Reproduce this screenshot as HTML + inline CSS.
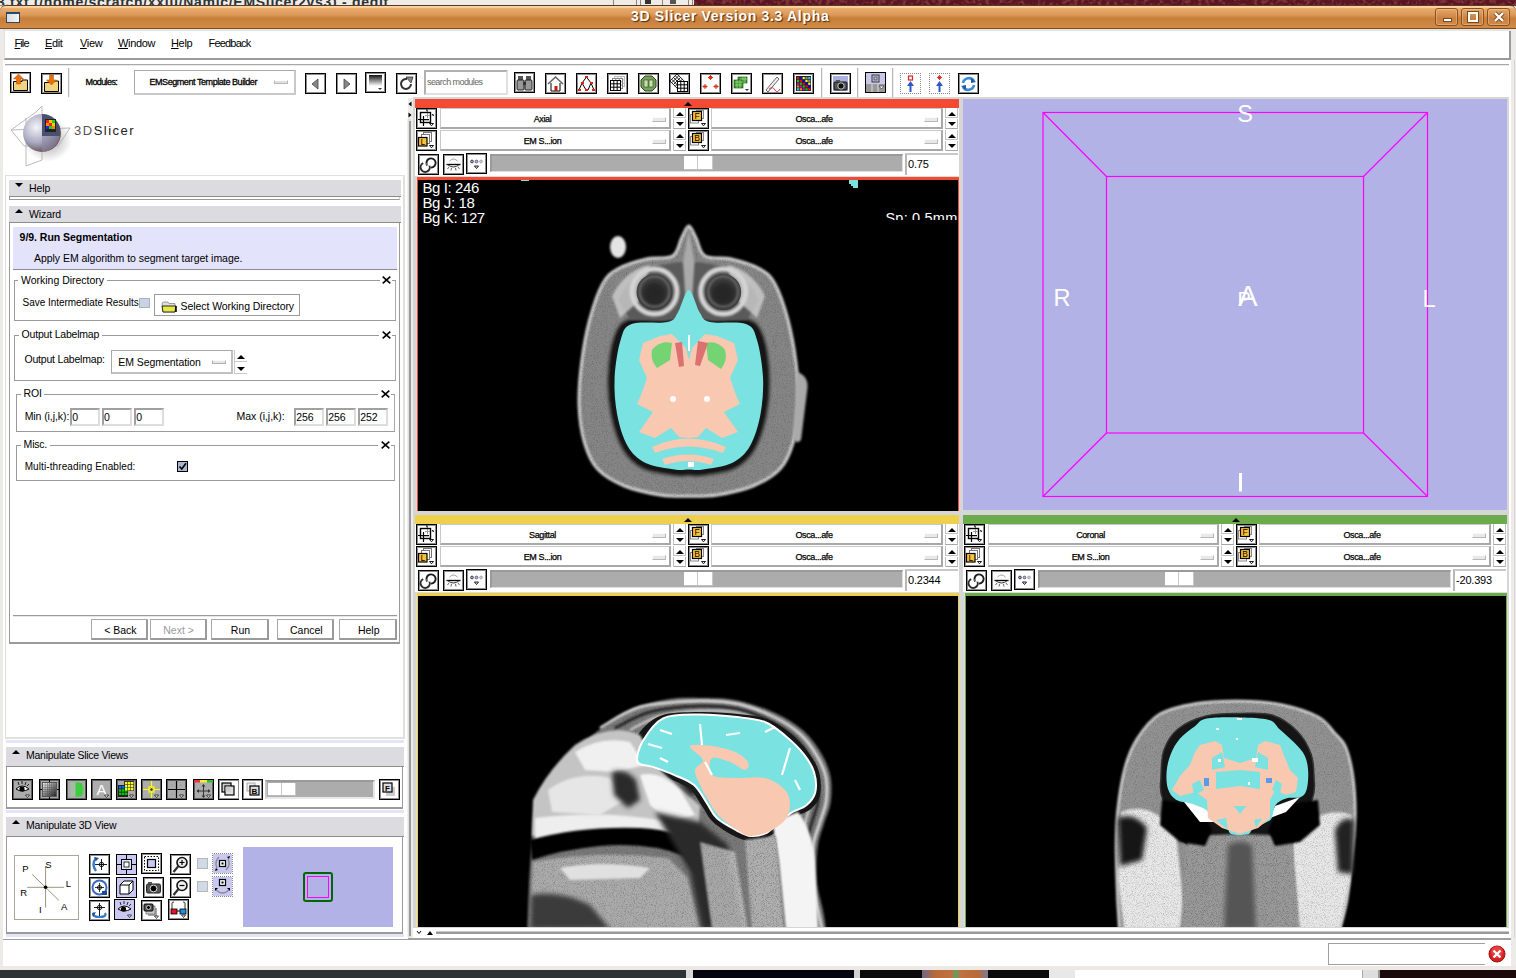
<!DOCTYPE html><html><head><meta charset="utf-8"><style>
*{margin:0;padding:0;box-sizing:border-box}
html,body{width:1516px;height:978px;overflow:hidden;background:#edebe8;font-family:"Liberation Sans",sans-serif;color:#000}
.a{position:absolute}
.t{position:absolute;white-space:nowrap;line-height:1}
.ib{position:absolute;width:21px;height:21px;border:1px solid #000;box-shadow:inset 0 0 0 1px rgba(0,0,0,.45);background:#fff;overflow:hidden}
.tu{position:absolute;width:0;height:0;border-left:4px solid transparent;border-right:4px solid transparent;border-bottom:4px solid #000}
.td{position:absolute;width:0;height:0;border-left:4px solid transparent;border-right:4px solid transparent;border-top:4px solid #000}
svg{position:absolute;overflow:visible}
</style></head><body>
<div class="a" style="left:0px;top:0px;width:694px;height:8px;background:#efebe7;overflow:hidden"><div class="t" style="left:-3px;top:-5.5px;font-size:14px;font-weight:bold;color:#2e3436;letter-spacing:0.7px">3.txt (/home/scratch/xxlu/Namic/EMSlicer2vs3) - gedit</div></div>
<div class="a" style="left:694px;top:0px;width:822px;height:8px;background:#5a1424"></div>
<svg style="left:694px;top:0;overflow:hidden" width="822" height="8"><defs><filter id="wp" x="0" y="0" width="100%" height="100%"><feTurbulence type="fractalNoise" baseFrequency="0.25" numOctaves="2" seed="7"/><feColorMatrix values="0 0 0 0 0.75  0 0 0 0 0.3  0 0 0 0 0.15  0 0 0 -4 2.2"/><feComposite in2="SourceGraphic" operator="in"/></filter></defs><rect width="822" height="8" fill="#fff" filter="url(#wp)" opacity=".25"/></svg>
<div class="a" style="left:0px;top:5px;width:694px;height:1px;background:#9a968f"></div>
<div class="a" style="left:613px;top:0px;width:1px;height:5px;background:#8a8680"></div>
<div class="a" style="left:636px;top:0px;width:1px;height:5px;background:#8a8680"></div>
<div class="a" style="left:640px;top:0px;width:1px;height:5px;background:#8a8680"></div>
<div class="a" style="left:662px;top:0px;width:1px;height:5px;background:#8a8680"></div>
<div class="a" style="left:688px;top:0px;width:1px;height:5px;background:#8a8680"></div>
<div class="a" style="left:692px;top:0px;width:1px;height:5px;background:#8a8680"></div>
<div class="a" style="left:645px;top:0px;width:6px;height:4px;background:#333"></div>
<div class="a" style="left:670px;top:0px;width:6px;height:4px;background:#555"></div>
<div class="a" style="left:0px;top:6px;width:1516px;height:964px;background:#edebe8"></div>
<div class="a" style="left:0px;top:5px;width:1516px;height:24px;border-radius:6px 6px 0 0;background:linear-gradient(#fbd3a4 0%,#fbd3a4 6%,#e8aa6a 12%,#dc9a5a 40%,#c67e3a 56%,#d28c48 100%);border-top:1px solid #5a3a20;border-bottom:1px solid #7e4a1c"></div>
<div class="t" style="left:631px;top:9px;font-size:14px;font-weight:bold;color:#fff;letter-spacing:0.68px;text-shadow:1px 1px 1px #4a2a08">3D Slicer Version 3.3 Alpha</div>
<div class="a" style="left:6px;top:12px;width:14px;height:11px;background:linear-gradient(90deg,#d8dde4,#f4f4f4);border:1px solid #3a4656;border-top:2px solid #2a4a6a"></div>
<div class="a" style="left:1435px;top:8px;width:23px;height:18px;border:1px solid #8a5020;border-radius:3px;background:linear-gradient(#e7a868,#c98040 60%,#d08c4c);box-shadow:inset 0 0 0 1px rgba(255,220,170,.35)"></div>
<div class="a" style="left:1461px;top:8px;width:23px;height:18px;border:1px solid #8a5020;border-radius:3px;background:linear-gradient(#e7a868,#c98040 60%,#d08c4c);box-shadow:inset 0 0 0 1px rgba(255,220,170,.35)"></div>
<div class="a" style="left:1487px;top:8px;width:23px;height:18px;border:1px solid #8a5020;border-radius:3px;background:linear-gradient(#e7a868,#c98040 60%,#d08c4c);box-shadow:inset 0 0 0 1px rgba(255,220,170,.35)"></div>
<div class="a" style="left:1443px;top:18px;width:9px;height:4px;background:#fff;border:1px solid #7a4a1a"></div>
<div class="a" style="left:1468px;top:12px;width:10px;height:10px;border:2px solid #fff;outline:1px solid #7a4a1a"></div>
<svg style="left:1493px;top:11px" width="12" height="12"><path d="M2 2L10 10M10 2L2 10" stroke="#7a4a1a" stroke-width="4"/><path d="M2 2L10 10M10 2L2 10" stroke="#fff" stroke-width="2.4"/></svg>
<div class="a" style="left:3px;top:29px;width:1508px;height:2px;background:#e4e4e4"></div>
<div class="a" style="left:4px;top:31px;width:1507px;height:29px;background:#fff;border-left:1px solid #e0e0e0;border-right:2px solid #9a9a9a;border-bottom:2px solid #9a9a9a"></div>
<div class="t" style="left:14.5px;top:38.34px;font-size:11px;letter-spacing:-0.9px"><u style="text-decoration-thickness:1px;text-underline-offset:1px">F</u>ile</div>
<div class="t" style="left:45px;top:38.34px;font-size:11px;letter-spacing:-0.35px"><u style="text-decoration-thickness:1px;text-underline-offset:1px">E</u>dit</div>
<div class="t" style="left:80px;top:38.34px;font-size:11px;letter-spacing:-0.35px"><u style="text-decoration-thickness:1px;text-underline-offset:1px">V</u>iew</div>
<div class="t" style="left:118px;top:38.34px;font-size:11px;letter-spacing:-0.35px"><u style="text-decoration-thickness:1px;text-underline-offset:1px">W</u>indow</div>
<div class="t" style="left:171px;top:38.34px;font-size:11px;letter-spacing:-0.35px"><u style="text-decoration-thickness:1px;text-underline-offset:1px">H</u>elp</div>
<div class="t" style="left:208.5px;top:38.34px;font-size:11px;letter-spacing:-0.8px">Feedback</div>
<div class="a" style="left:3px;top:60px;width:1508px;height:38px;background:#fff"></div>
<div class="a" style="left:5px;top:64px;width:1504px;height:2px;background:#a8a8a8;border-bottom:1px solid #e8e8e8"></div>
<div class="a" style="left:1511px;top:29px;width:5px;height:941px;background:#edebe8"></div>
<div class="a" style="left:1514px;top:60px;width:1px;height:878px;background:#d8d5d0"></div>
<div class="a" style="left:3px;top:938px;width:1508px;height:2px;background:#a0a0a0"></div>
<div class="a" style="left:3px;top:940px;width:1508px;height:26px;background:#fff"></div>
<div class="a" style="left:1328px;top:943px;width:157px;height:22px;border:1px solid #a0a0a0;border-right:none;background:#fff"></div>
<svg style="left:1488px;top:945px" width="18" height="18"><circle cx="9" cy="9" r="8" fill="#d42020" stroke="#a01010"/><circle cx="9" cy="7" r="6" fill="#ff5a5a" opacity=".5"/><path d="M5.5 5.5L12.5 12.5M12.5 5.5L5.5 12.5" stroke="#fff" stroke-width="2.4"/></svg>
<div class="a" style="left:0px;top:966px;width:1516px;height:4px;background:#ece9e4"></div>
<div class="a" style="left:0px;top:970px;width:1516px;height:8px;background:#2e3436"></div>
<div class="a" style="left:686px;top:970px;width:7px;height:8px;background:#d8d8d8"></div>
<div class="a" style="left:693px;top:970px;width:161px;height:8px;background:#050510"></div>
<div class="a" style="left:854px;top:970px;width:6px;height:8px;background:#d0d0d0"></div>
<div class="a" style="left:860px;top:970px;width:189px;height:8px;background:#0a0a0a"></div>
<div class="a" style="left:922px;top:970px;width:66px;height:8px;background:linear-gradient(90deg,#6a6a8a,#b86a38 20%,#c07040 45%,#60a060 50%,#c07040 60%,#b86a38 85%,#7a7a9a)"></div>
<div class="a" style="left:1049px;top:970px;width:26px;height:8px;background:#e8e8e8"></div>
<div class="a" style="left:1075px;top:970px;width:287px;height:8px;background:#fff"></div>
<div class="a" style="left:1362px;top:970px;width:18px;height:8px;background:#dedede;border-left:1px solid #aaa;border-right:2px solid #999"></div>
<div class="a" style="left:1380px;top:970px;width:136px;height:8px;background:#1a0a0c"></div>
<div class="a" style="left:413px;top:97px;width:1096px;height:833px;background:#d6d6d6"></div>
<div class="a" style="left:1509px;top:97px;width:2px;height:841px;background:#fff"></div>
<div class="a" style="left:415px;top:99px;width:544px;height:9px;background:#f24b33"></div>
<div class="a" style="left:415px;top:108px;width:544px;height:68px;background:#fff"></div>
<div class="tu" style="left:684px;top:102px"></div>
<div class="ib" style="left:416px;top:108px;width:21px;height:21px;background:#fff;"><svg style="left:0;top:0" width="19" height="19" viewBox="0 0 19 19"><rect x="3.5" y="3.5" width="10" height="10" fill="none" stroke="#000" stroke-width="1.4"/><path d="M10.5 4V9M8 6.5H13" stroke="#999" stroke-width="1"/><path d="M4 11.5H12" stroke="#bbb" stroke-width="1"/><path d="M1 10.5H12M6.5 7V17M9.5 0.5L10.5 2.5M15 5.5L17 6.5" stroke="#000" stroke-width="1.2"/><path d="M12.5 14.5H16.5L14.5 16.8Z" fill="#fff" stroke="#000" stroke-width=".9"/></svg></div>
<div class="a" style="left:440px;top:108px;width:231px;height:21px;background:#fff;border-top:1px solid #c8c8c8;border-left:1px solid #c8c8c8;border-right:2px solid #a8a8a8;border-bottom:2px solid #a8a8a8"><div class="t" style="left:0;width:203px;text-align:center;top:6.0px;font-size:9px;letter-spacing:-0.4px;color:#000;-webkit-text-stroke:0.25px #000">Axial</div><div class="a" style="left:211px;top:8px;width:14px;height:5px;background:#e8e8e8;border:1px solid #b8b8b8;border-top-color:#fafafa;border-left-color:#fafafa"></div></div>
<div class="a" style="left:673px;top:108px;width:13px;height:10px;border-left:1px solid #c0c0c0;border-bottom:1px solid #c0c0c0;border-right:1px solid #c0c0c0"></div>
<div class="a" style="left:673px;top:119px;width:13px;height:10px;border-left:1px solid #c0c0c0;border-bottom:1px solid #a8a8a8;border-right:1px solid #c0c0c0"></div>
<div class="tu" style="left:675.5px;top:112px"></div><div class="td" style="left:675.5px;top:122px"></div>
<div class="ib" style="left:688px;top:108px;width:21px;height:21px;background:#fff;"><svg style="left:0;top:0" width="19" height="19" viewBox="0 0 19 19"><rect x="7.5" y="1.5" width="7" height="8" fill="#fff" stroke="#888" stroke-width="1"/><rect x="1.5" y="5.5" width="8" height="8.5" fill="#fff" stroke="#888" stroke-width="1"/><rect x="3.5" y="2.5" width="9" height="9" fill="#fcc03a" stroke="#000" stroke-width="1.2"/><text x="8" y="10.2" font-size="8.5" font-family="Liberation Sans" text-anchor="middle">F</text><path d="M12.5 14.5H16.5L14.5 16.8Z" fill="#fff" stroke="#000" stroke-width=".9"/></svg></div>
<div class="a" style="left:711px;top:108px;width:232px;height:21px;background:#fff;border-top:1px solid #c8c8c8;border-left:1px solid #c8c8c8;border-right:2px solid #a8a8a8;border-bottom:2px solid #a8a8a8"><div class="t" style="left:0;width:204px;text-align:center;top:6.0px;font-size:9px;letter-spacing:-0.4px;color:#000;-webkit-text-stroke:0.25px #000">Osca...afe</div><div class="a" style="left:212px;top:8px;width:14px;height:5px;background:#e8e8e8;border:1px solid #b8b8b8;border-top-color:#fafafa;border-left-color:#fafafa"></div></div>
<div class="a" style="left:945px;top:108px;width:13px;height:10px;border-left:1px solid #c0c0c0;border-bottom:1px solid #c0c0c0;border-right:1px solid #c0c0c0"></div>
<div class="a" style="left:945px;top:119px;width:13px;height:10px;border-left:1px solid #c0c0c0;border-bottom:1px solid #a8a8a8;border-right:1px solid #c0c0c0"></div>
<div class="tu" style="left:947.5px;top:112px"></div><div class="td" style="left:947.5px;top:122px"></div>
<div class="ib" style="left:416px;top:130px;width:21px;height:21px;background:#fff;"><svg style="left:0;top:0" width="19" height="19" viewBox="0 0 19 19"><rect x="6.5" y="1.5" width="8" height="9" fill="#fff" stroke="#777" stroke-width="1"/><rect x="4.5" y="3.5" width="8" height="9" fill="#fff" stroke="#777" stroke-width="1"/><rect x="1.5" y="6.5" width="8.5" height="8.5" fill="#fcc03a" stroke="#000" stroke-width="1.2"/><text x="5.8" y="13.5" font-size="8.5" font-family="Liberation Sans" text-anchor="middle">L</text><path d="M12.5 14.5H16.5L14.5 16.8Z" fill="#fff" stroke="#000" stroke-width=".9"/></svg></div>
<div class="a" style="left:440px;top:130px;width:231px;height:21px;background:#fff;border-top:1px solid #c8c8c8;border-left:1px solid #c8c8c8;border-right:2px solid #a8a8a8;border-bottom:2px solid #a8a8a8"><div class="t" style="left:0;width:203px;text-align:center;top:6.0px;font-size:9px;letter-spacing:-0.4px;color:#000;-webkit-text-stroke:0.25px #000">EM S...ion</div><div class="a" style="left:211px;top:8px;width:14px;height:5px;background:#e8e8e8;border:1px solid #b8b8b8;border-top-color:#fafafa;border-left-color:#fafafa"></div></div>
<div class="a" style="left:673px;top:130px;width:13px;height:10px;border-left:1px solid #c0c0c0;border-bottom:1px solid #c0c0c0;border-right:1px solid #c0c0c0"></div>
<div class="a" style="left:673px;top:141px;width:13px;height:10px;border-left:1px solid #c0c0c0;border-bottom:1px solid #a8a8a8;border-right:1px solid #c0c0c0"></div>
<div class="tu" style="left:675.5px;top:134px"></div><div class="td" style="left:675.5px;top:144px"></div>
<div class="ib" style="left:688px;top:130px;width:21px;height:21px;background:#fff;"><svg style="left:0;top:0" width="19" height="19" viewBox="0 0 19 19"><rect x="7.5" y="1.5" width="7" height="8" fill="#fff" stroke="#888" stroke-width="1"/><rect x="1.5" y="5.5" width="8" height="8.5" fill="#fff" stroke="#888" stroke-width="1"/><rect x="3.5" y="2.5" width="9" height="9" fill="#fcc03a" stroke="#000" stroke-width="1.2"/><text x="8" y="10.2" font-size="8.5" font-family="Liberation Sans" text-anchor="middle">B</text><path d="M12.5 14.5H16.5L14.5 16.8Z" fill="#fff" stroke="#000" stroke-width=".9"/></svg></div>
<div class="a" style="left:711px;top:130px;width:232px;height:21px;background:#fff;border-top:1px solid #c8c8c8;border-left:1px solid #c8c8c8;border-right:2px solid #a8a8a8;border-bottom:2px solid #a8a8a8"><div class="t" style="left:0;width:204px;text-align:center;top:6.0px;font-size:9px;letter-spacing:-0.4px;color:#000;-webkit-text-stroke:0.25px #000">Osca...afe</div><div class="a" style="left:212px;top:8px;width:14px;height:5px;background:#e8e8e8;border:1px solid #b8b8b8;border-top-color:#fafafa;border-left-color:#fafafa"></div></div>
<div class="a" style="left:945px;top:130px;width:13px;height:10px;border-left:1px solid #c0c0c0;border-bottom:1px solid #c0c0c0;border-right:1px solid #c0c0c0"></div>
<div class="a" style="left:945px;top:141px;width:13px;height:10px;border-left:1px solid #c0c0c0;border-bottom:1px solid #a8a8a8;border-right:1px solid #c0c0c0"></div>
<div class="tu" style="left:947.5px;top:134px"></div><div class="td" style="left:947.5px;top:144px"></div>
<div class="ib" style="left:418px;top:154px;width:21px;height:21px;background:#fff;"><svg style="left:0;top:0" width="19" height="19" viewBox="0 0 19 19"><path d="M8.2 10.5A4.6 4.6 0 1 1 12 12.6" fill="none" stroke="#1a1a1a" stroke-width="1.9"/><path d="M10.5 10.8A4.6 4.6 0 1 1 4.2 8.2" fill="none" stroke="#2a2a2a" stroke-width="1.9"/><path d="M6.5 8L9.5 11" stroke="#aaa" stroke-width="1"/></svg></div>
<div class="ib" style="left:443px;top:154px;width:21px;height:21px;background:#fafafa;"><svg style="left:0;top:0" width="19" height="19" viewBox="0 0 19 19"><path d="M2.5 9.5H16.5" stroke="#000" stroke-width="1.3"/><path d="M3.5 9.5Q9.5 14.5 15.5 9.5" fill="none" stroke="#333" stroke-width="1"/><path d="M5 12L3.5 14M7.5 13L7 15.5M11.5 13L12 15.5M14 12L15.5 14" stroke="#555" stroke-width=".9"/><path d="M5.5 6Q9.5 2 13.5 6" fill="none" stroke="#999" stroke-width=".9"/></svg></div>
<div class="ib" style="left:466px;top:153px;width:21px;height:21px;background:#fff;"><svg style="left:0;top:0" width="19" height="19" viewBox="0 0 19 19"><circle cx="5" cy="7.5" r="1.4" fill="#a8b0d8" stroke="#222" stroke-width=".8"/><circle cx="9.5" cy="7.5" r="1.4" fill="#a8b0d8" stroke="#555" stroke-width=".8"/><circle cx="14" cy="7.5" r="1.4" fill="#c8cce8" stroke="#999" stroke-width=".8"/><path d="M7.5 12H11.5L9.5 14.5Z" fill="#fff" stroke="#000" stroke-width=".9"/></svg></div>
<div class="a" style="left:490px;top:154px;width:413px;height:18px;background:#acacac;border-top:2px solid #9a9a9a;border-left:2px solid #9a9a9a;border-bottom:1px solid #e0e0e0;border-right:1px solid #e0e0e0"></div>
<div class="a" style="left:684.4px;top:156px;width:29px;height:14px;background:#fff;border-right:1px solid #c8c8c8;border-bottom:1px solid #c0c0c0"><div class="a" style="left:13px;top:0;width:1px;height:13px;background:#c8c8c8"></div></div>
<div class="a" style="left:905px;top:153px;width:53px;height:22px;background:#fff;border-top:2px solid #c8c8c8;border-left:2px solid #b8b8b8"><div class="t" style="left:1px;top:4px;font-size:11px;letter-spacing:-0.2px">0.75</div></div>
<div class="a" style="left:416px;top:176px;width:543px;height:335px;background:#dcdcdc"></div>
<div class="a" style="left:417px;top:177px;width:542px;height:334px;background:#f24b33"></div>
<div class="a" style="left:418px;top:180px;width:540px;height:330.5px;background:#000;overflow:hidden"></div>
<div class="a" style="left:415px;top:515px;width:544px;height:9px;background:#edd04b"></div>
<div class="a" style="left:415px;top:524px;width:544px;height:68px;background:#fff"></div>
<div class="tu" style="left:684px;top:518px"></div>
<div class="ib" style="left:416px;top:524px;width:21px;height:21px;background:#fff;"><svg style="left:0;top:0" width="19" height="19" viewBox="0 0 19 19"><rect x="3.5" y="3.5" width="10" height="10" fill="none" stroke="#000" stroke-width="1.4"/><path d="M10.5 4V9M8 6.5H13" stroke="#999" stroke-width="1"/><path d="M4 11.5H12" stroke="#bbb" stroke-width="1"/><path d="M1 10.5H12M6.5 7V17M9.5 0.5L10.5 2.5M15 5.5L17 6.5" stroke="#000" stroke-width="1.2"/><path d="M12.5 14.5H16.5L14.5 16.8Z" fill="#fff" stroke="#000" stroke-width=".9"/></svg></div>
<div class="a" style="left:440px;top:524px;width:231px;height:21px;background:#fff;border-top:1px solid #c8c8c8;border-left:1px solid #c8c8c8;border-right:2px solid #a8a8a8;border-bottom:2px solid #a8a8a8"><div class="t" style="left:0;width:203px;text-align:center;top:6.0px;font-size:9px;letter-spacing:-0.4px;color:#000;-webkit-text-stroke:0.25px #000">Sagittal</div><div class="a" style="left:211px;top:8px;width:14px;height:5px;background:#e8e8e8;border:1px solid #b8b8b8;border-top-color:#fafafa;border-left-color:#fafafa"></div></div>
<div class="a" style="left:673px;top:524px;width:13px;height:10px;border-left:1px solid #c0c0c0;border-bottom:1px solid #c0c0c0;border-right:1px solid #c0c0c0"></div>
<div class="a" style="left:673px;top:535px;width:13px;height:10px;border-left:1px solid #c0c0c0;border-bottom:1px solid #a8a8a8;border-right:1px solid #c0c0c0"></div>
<div class="tu" style="left:675.5px;top:528px"></div><div class="td" style="left:675.5px;top:538px"></div>
<div class="ib" style="left:688px;top:524px;width:21px;height:21px;background:#fff;"><svg style="left:0;top:0" width="19" height="19" viewBox="0 0 19 19"><rect x="7.5" y="1.5" width="7" height="8" fill="#fff" stroke="#888" stroke-width="1"/><rect x="1.5" y="5.5" width="8" height="8.5" fill="#fff" stroke="#888" stroke-width="1"/><rect x="3.5" y="2.5" width="9" height="9" fill="#fcc03a" stroke="#000" stroke-width="1.2"/><text x="8" y="10.2" font-size="8.5" font-family="Liberation Sans" text-anchor="middle">F</text><path d="M12.5 14.5H16.5L14.5 16.8Z" fill="#fff" stroke="#000" stroke-width=".9"/></svg></div>
<div class="a" style="left:711px;top:524px;width:232px;height:21px;background:#fff;border-top:1px solid #c8c8c8;border-left:1px solid #c8c8c8;border-right:2px solid #a8a8a8;border-bottom:2px solid #a8a8a8"><div class="t" style="left:0;width:204px;text-align:center;top:6.0px;font-size:9px;letter-spacing:-0.4px;color:#000;-webkit-text-stroke:0.25px #000">Osca...afe</div><div class="a" style="left:212px;top:8px;width:14px;height:5px;background:#e8e8e8;border:1px solid #b8b8b8;border-top-color:#fafafa;border-left-color:#fafafa"></div></div>
<div class="a" style="left:945px;top:524px;width:13px;height:10px;border-left:1px solid #c0c0c0;border-bottom:1px solid #c0c0c0;border-right:1px solid #c0c0c0"></div>
<div class="a" style="left:945px;top:535px;width:13px;height:10px;border-left:1px solid #c0c0c0;border-bottom:1px solid #a8a8a8;border-right:1px solid #c0c0c0"></div>
<div class="tu" style="left:947.5px;top:528px"></div><div class="td" style="left:947.5px;top:538px"></div>
<div class="ib" style="left:416px;top:546px;width:21px;height:21px;background:#fff;"><svg style="left:0;top:0" width="19" height="19" viewBox="0 0 19 19"><rect x="6.5" y="1.5" width="8" height="9" fill="#fff" stroke="#777" stroke-width="1"/><rect x="4.5" y="3.5" width="8" height="9" fill="#fff" stroke="#777" stroke-width="1"/><rect x="1.5" y="6.5" width="8.5" height="8.5" fill="#fcc03a" stroke="#000" stroke-width="1.2"/><text x="5.8" y="13.5" font-size="8.5" font-family="Liberation Sans" text-anchor="middle">L</text><path d="M12.5 14.5H16.5L14.5 16.8Z" fill="#fff" stroke="#000" stroke-width=".9"/></svg></div>
<div class="a" style="left:440px;top:546px;width:231px;height:21px;background:#fff;border-top:1px solid #c8c8c8;border-left:1px solid #c8c8c8;border-right:2px solid #a8a8a8;border-bottom:2px solid #a8a8a8"><div class="t" style="left:0;width:203px;text-align:center;top:6.0px;font-size:9px;letter-spacing:-0.4px;color:#000;-webkit-text-stroke:0.25px #000">EM S...ion</div><div class="a" style="left:211px;top:8px;width:14px;height:5px;background:#e8e8e8;border:1px solid #b8b8b8;border-top-color:#fafafa;border-left-color:#fafafa"></div></div>
<div class="a" style="left:673px;top:546px;width:13px;height:10px;border-left:1px solid #c0c0c0;border-bottom:1px solid #c0c0c0;border-right:1px solid #c0c0c0"></div>
<div class="a" style="left:673px;top:557px;width:13px;height:10px;border-left:1px solid #c0c0c0;border-bottom:1px solid #a8a8a8;border-right:1px solid #c0c0c0"></div>
<div class="tu" style="left:675.5px;top:550px"></div><div class="td" style="left:675.5px;top:560px"></div>
<div class="ib" style="left:688px;top:546px;width:21px;height:21px;background:#fff;"><svg style="left:0;top:0" width="19" height="19" viewBox="0 0 19 19"><rect x="7.5" y="1.5" width="7" height="8" fill="#fff" stroke="#888" stroke-width="1"/><rect x="1.5" y="5.5" width="8" height="8.5" fill="#fff" stroke="#888" stroke-width="1"/><rect x="3.5" y="2.5" width="9" height="9" fill="#fcc03a" stroke="#000" stroke-width="1.2"/><text x="8" y="10.2" font-size="8.5" font-family="Liberation Sans" text-anchor="middle">B</text><path d="M12.5 14.5H16.5L14.5 16.8Z" fill="#fff" stroke="#000" stroke-width=".9"/></svg></div>
<div class="a" style="left:711px;top:546px;width:232px;height:21px;background:#fff;border-top:1px solid #c8c8c8;border-left:1px solid #c8c8c8;border-right:2px solid #a8a8a8;border-bottom:2px solid #a8a8a8"><div class="t" style="left:0;width:204px;text-align:center;top:6.0px;font-size:9px;letter-spacing:-0.4px;color:#000;-webkit-text-stroke:0.25px #000">Osca...afe</div><div class="a" style="left:212px;top:8px;width:14px;height:5px;background:#e8e8e8;border:1px solid #b8b8b8;border-top-color:#fafafa;border-left-color:#fafafa"></div></div>
<div class="a" style="left:945px;top:546px;width:13px;height:10px;border-left:1px solid #c0c0c0;border-bottom:1px solid #c0c0c0;border-right:1px solid #c0c0c0"></div>
<div class="a" style="left:945px;top:557px;width:13px;height:10px;border-left:1px solid #c0c0c0;border-bottom:1px solid #a8a8a8;border-right:1px solid #c0c0c0"></div>
<div class="tu" style="left:947.5px;top:550px"></div><div class="td" style="left:947.5px;top:560px"></div>
<div class="ib" style="left:418px;top:570px;width:21px;height:21px;background:#fff;"><svg style="left:0;top:0" width="19" height="19" viewBox="0 0 19 19"><path d="M8.2 10.5A4.6 4.6 0 1 1 12 12.6" fill="none" stroke="#1a1a1a" stroke-width="1.9"/><path d="M10.5 10.8A4.6 4.6 0 1 1 4.2 8.2" fill="none" stroke="#2a2a2a" stroke-width="1.9"/><path d="M6.5 8L9.5 11" stroke="#aaa" stroke-width="1"/></svg></div>
<div class="ib" style="left:443px;top:570px;width:21px;height:21px;background:#fafafa;"><svg style="left:0;top:0" width="19" height="19" viewBox="0 0 19 19"><path d="M2.5 9.5H16.5" stroke="#000" stroke-width="1.3"/><path d="M3.5 9.5Q9.5 14.5 15.5 9.5" fill="none" stroke="#333" stroke-width="1"/><path d="M5 12L3.5 14M7.5 13L7 15.5M11.5 13L12 15.5M14 12L15.5 14" stroke="#555" stroke-width=".9"/><path d="M5.5 6Q9.5 2 13.5 6" fill="none" stroke="#999" stroke-width=".9"/></svg></div>
<div class="ib" style="left:466px;top:569px;width:21px;height:21px;background:#fff;"><svg style="left:0;top:0" width="19" height="19" viewBox="0 0 19 19"><circle cx="5" cy="7.5" r="1.4" fill="#a8b0d8" stroke="#222" stroke-width=".8"/><circle cx="9.5" cy="7.5" r="1.4" fill="#a8b0d8" stroke="#555" stroke-width=".8"/><circle cx="14" cy="7.5" r="1.4" fill="#c8cce8" stroke="#999" stroke-width=".8"/><path d="M7.5 12H11.5L9.5 14.5Z" fill="#fff" stroke="#000" stroke-width=".9"/></svg></div>
<div class="a" style="left:490px;top:570px;width:413px;height:18px;background:#acacac;border-top:2px solid #9a9a9a;border-left:2px solid #9a9a9a;border-bottom:1px solid #e0e0e0;border-right:1px solid #e0e0e0"></div>
<div class="a" style="left:684.4px;top:572px;width:29px;height:14px;background:#fff;border-right:1px solid #c8c8c8;border-bottom:1px solid #c0c0c0"><div class="a" style="left:13px;top:0;width:1px;height:13px;background:#c8c8c8"></div></div>
<div class="a" style="left:905px;top:569px;width:53px;height:22px;background:#fff;border-top:2px solid #c8c8c8;border-left:2px solid #b8b8b8"><div class="t" style="left:1px;top:4px;font-size:11px;letter-spacing:-0.2px">0.2344</div></div>
<div class="a" style="left:416px;top:592px;width:543px;height:335px;background:#dcdcdc"></div>
<div class="a" style="left:417px;top:593px;width:542px;height:334px;background:#edd04b"></div>
<div class="a" style="left:418px;top:596px;width:540px;height:330.5px;background:#000;overflow:hidden"></div>
<div class="a" style="left:963px;top:515px;width:544px;height:9px;background:#6cab4c"></div>
<div class="a" style="left:963px;top:524px;width:544px;height:68px;background:#fff"></div>
<div class="tu" style="left:1232px;top:518px"></div>
<div class="ib" style="left:964px;top:524px;width:21px;height:21px;background:#fff;"><svg style="left:0;top:0" width="19" height="19" viewBox="0 0 19 19"><rect x="3.5" y="3.5" width="10" height="10" fill="none" stroke="#000" stroke-width="1.4"/><path d="M10.5 4V9M8 6.5H13" stroke="#999" stroke-width="1"/><path d="M4 11.5H12" stroke="#bbb" stroke-width="1"/><path d="M1 10.5H12M6.5 7V17M9.5 0.5L10.5 2.5M15 5.5L17 6.5" stroke="#000" stroke-width="1.2"/><path d="M12.5 14.5H16.5L14.5 16.8Z" fill="#fff" stroke="#000" stroke-width=".9"/></svg></div>
<div class="a" style="left:988px;top:524px;width:231px;height:21px;background:#fff;border-top:1px solid #c8c8c8;border-left:1px solid #c8c8c8;border-right:2px solid #a8a8a8;border-bottom:2px solid #a8a8a8"><div class="t" style="left:0;width:203px;text-align:center;top:6.0px;font-size:9px;letter-spacing:-0.4px;color:#000;-webkit-text-stroke:0.25px #000">Coronal</div><div class="a" style="left:211px;top:8px;width:14px;height:5px;background:#e8e8e8;border:1px solid #b8b8b8;border-top-color:#fafafa;border-left-color:#fafafa"></div></div>
<div class="a" style="left:1221px;top:524px;width:13px;height:10px;border-left:1px solid #c0c0c0;border-bottom:1px solid #c0c0c0;border-right:1px solid #c0c0c0"></div>
<div class="a" style="left:1221px;top:535px;width:13px;height:10px;border-left:1px solid #c0c0c0;border-bottom:1px solid #a8a8a8;border-right:1px solid #c0c0c0"></div>
<div class="tu" style="left:1223.5px;top:528px"></div><div class="td" style="left:1223.5px;top:538px"></div>
<div class="ib" style="left:1236px;top:524px;width:21px;height:21px;background:#fff;"><svg style="left:0;top:0" width="19" height="19" viewBox="0 0 19 19"><rect x="7.5" y="1.5" width="7" height="8" fill="#fff" stroke="#888" stroke-width="1"/><rect x="1.5" y="5.5" width="8" height="8.5" fill="#fff" stroke="#888" stroke-width="1"/><rect x="3.5" y="2.5" width="9" height="9" fill="#fcc03a" stroke="#000" stroke-width="1.2"/><text x="8" y="10.2" font-size="8.5" font-family="Liberation Sans" text-anchor="middle">F</text><path d="M12.5 14.5H16.5L14.5 16.8Z" fill="#fff" stroke="#000" stroke-width=".9"/></svg></div>
<div class="a" style="left:1259px;top:524px;width:232px;height:21px;background:#fff;border-top:1px solid #c8c8c8;border-left:1px solid #c8c8c8;border-right:2px solid #a8a8a8;border-bottom:2px solid #a8a8a8"><div class="t" style="left:0;width:204px;text-align:center;top:6.0px;font-size:9px;letter-spacing:-0.4px;color:#000;-webkit-text-stroke:0.25px #000">Osca...afe</div><div class="a" style="left:212px;top:8px;width:14px;height:5px;background:#e8e8e8;border:1px solid #b8b8b8;border-top-color:#fafafa;border-left-color:#fafafa"></div></div>
<div class="a" style="left:1493px;top:524px;width:13px;height:10px;border-left:1px solid #c0c0c0;border-bottom:1px solid #c0c0c0;border-right:1px solid #c0c0c0"></div>
<div class="a" style="left:1493px;top:535px;width:13px;height:10px;border-left:1px solid #c0c0c0;border-bottom:1px solid #a8a8a8;border-right:1px solid #c0c0c0"></div>
<div class="tu" style="left:1495.5px;top:528px"></div><div class="td" style="left:1495.5px;top:538px"></div>
<div class="ib" style="left:964px;top:546px;width:21px;height:21px;background:#fff;"><svg style="left:0;top:0" width="19" height="19" viewBox="0 0 19 19"><rect x="6.5" y="1.5" width="8" height="9" fill="#fff" stroke="#777" stroke-width="1"/><rect x="4.5" y="3.5" width="8" height="9" fill="#fff" stroke="#777" stroke-width="1"/><rect x="1.5" y="6.5" width="8.5" height="8.5" fill="#fcc03a" stroke="#000" stroke-width="1.2"/><text x="5.8" y="13.5" font-size="8.5" font-family="Liberation Sans" text-anchor="middle">L</text><path d="M12.5 14.5H16.5L14.5 16.8Z" fill="#fff" stroke="#000" stroke-width=".9"/></svg></div>
<div class="a" style="left:988px;top:546px;width:231px;height:21px;background:#fff;border-top:1px solid #c8c8c8;border-left:1px solid #c8c8c8;border-right:2px solid #a8a8a8;border-bottom:2px solid #a8a8a8"><div class="t" style="left:0;width:203px;text-align:center;top:6.0px;font-size:9px;letter-spacing:-0.4px;color:#000;-webkit-text-stroke:0.25px #000">EM S...ion</div><div class="a" style="left:211px;top:8px;width:14px;height:5px;background:#e8e8e8;border:1px solid #b8b8b8;border-top-color:#fafafa;border-left-color:#fafafa"></div></div>
<div class="a" style="left:1221px;top:546px;width:13px;height:10px;border-left:1px solid #c0c0c0;border-bottom:1px solid #c0c0c0;border-right:1px solid #c0c0c0"></div>
<div class="a" style="left:1221px;top:557px;width:13px;height:10px;border-left:1px solid #c0c0c0;border-bottom:1px solid #a8a8a8;border-right:1px solid #c0c0c0"></div>
<div class="tu" style="left:1223.5px;top:550px"></div><div class="td" style="left:1223.5px;top:560px"></div>
<div class="ib" style="left:1236px;top:546px;width:21px;height:21px;background:#fff;"><svg style="left:0;top:0" width="19" height="19" viewBox="0 0 19 19"><rect x="7.5" y="1.5" width="7" height="8" fill="#fff" stroke="#888" stroke-width="1"/><rect x="1.5" y="5.5" width="8" height="8.5" fill="#fff" stroke="#888" stroke-width="1"/><rect x="3.5" y="2.5" width="9" height="9" fill="#fcc03a" stroke="#000" stroke-width="1.2"/><text x="8" y="10.2" font-size="8.5" font-family="Liberation Sans" text-anchor="middle">B</text><path d="M12.5 14.5H16.5L14.5 16.8Z" fill="#fff" stroke="#000" stroke-width=".9"/></svg></div>
<div class="a" style="left:1259px;top:546px;width:232px;height:21px;background:#fff;border-top:1px solid #c8c8c8;border-left:1px solid #c8c8c8;border-right:2px solid #a8a8a8;border-bottom:2px solid #a8a8a8"><div class="t" style="left:0;width:204px;text-align:center;top:6.0px;font-size:9px;letter-spacing:-0.4px;color:#000;-webkit-text-stroke:0.25px #000">Osca...afe</div><div class="a" style="left:212px;top:8px;width:14px;height:5px;background:#e8e8e8;border:1px solid #b8b8b8;border-top-color:#fafafa;border-left-color:#fafafa"></div></div>
<div class="a" style="left:1493px;top:546px;width:13px;height:10px;border-left:1px solid #c0c0c0;border-bottom:1px solid #c0c0c0;border-right:1px solid #c0c0c0"></div>
<div class="a" style="left:1493px;top:557px;width:13px;height:10px;border-left:1px solid #c0c0c0;border-bottom:1px solid #a8a8a8;border-right:1px solid #c0c0c0"></div>
<div class="tu" style="left:1495.5px;top:550px"></div><div class="td" style="left:1495.5px;top:560px"></div>
<div class="ib" style="left:966px;top:570px;width:21px;height:21px;background:#fff;"><svg style="left:0;top:0" width="19" height="19" viewBox="0 0 19 19"><path d="M8.2 10.5A4.6 4.6 0 1 1 12 12.6" fill="none" stroke="#1a1a1a" stroke-width="1.9"/><path d="M10.5 10.8A4.6 4.6 0 1 1 4.2 8.2" fill="none" stroke="#2a2a2a" stroke-width="1.9"/><path d="M6.5 8L9.5 11" stroke="#aaa" stroke-width="1"/></svg></div>
<div class="ib" style="left:991px;top:570px;width:21px;height:21px;background:#fafafa;"><svg style="left:0;top:0" width="19" height="19" viewBox="0 0 19 19"><path d="M2.5 9.5H16.5" stroke="#000" stroke-width="1.3"/><path d="M3.5 9.5Q9.5 14.5 15.5 9.5" fill="none" stroke="#333" stroke-width="1"/><path d="M5 12L3.5 14M7.5 13L7 15.5M11.5 13L12 15.5M14 12L15.5 14" stroke="#555" stroke-width=".9"/><path d="M5.5 6Q9.5 2 13.5 6" fill="none" stroke="#999" stroke-width=".9"/></svg></div>
<div class="ib" style="left:1014px;top:569px;width:21px;height:21px;background:#fff;"><svg style="left:0;top:0" width="19" height="19" viewBox="0 0 19 19"><circle cx="5" cy="7.5" r="1.4" fill="#a8b0d8" stroke="#222" stroke-width=".8"/><circle cx="9.5" cy="7.5" r="1.4" fill="#a8b0d8" stroke="#555" stroke-width=".8"/><circle cx="14" cy="7.5" r="1.4" fill="#c8cce8" stroke="#999" stroke-width=".8"/><path d="M7.5 12H11.5L9.5 14.5Z" fill="#fff" stroke="#000" stroke-width=".9"/></svg></div>
<div class="a" style="left:1038px;top:570px;width:413px;height:18px;background:#acacac;border-top:2px solid #9a9a9a;border-left:2px solid #9a9a9a;border-bottom:1px solid #e0e0e0;border-right:1px solid #e0e0e0"></div>
<div class="a" style="left:1164.7px;top:572px;width:29px;height:14px;background:#fff;border-right:1px solid #c8c8c8;border-bottom:1px solid #c0c0c0"><div class="a" style="left:13px;top:0;width:1px;height:13px;background:#c8c8c8"></div></div>
<div class="a" style="left:1453px;top:569px;width:53px;height:22px;background:#fff;border-top:2px solid #c8c8c8;border-left:2px solid #b8b8b8"><div class="t" style="left:1px;top:4px;font-size:11px;letter-spacing:-0.2px">-20.393</div></div>
<div class="a" style="left:964px;top:592px;width:543px;height:335px;background:#dcdcdc"></div>
<div class="a" style="left:965px;top:593px;width:542px;height:334px;background:#6cab4c"></div>
<div class="a" style="left:966px;top:596px;width:540px;height:330.5px;background:#000;overflow:hidden"></div>
<div class="a" style="left:963px;top:99px;width:544px;height:411px;background:#b2b2e6"></div>
<div class="a" style="left:413px;top:928px;width:1096px;height:10px;background:#fff"></div>
<div class="a" style="left:436px;top:931px;width:1073px;height:3px;background:#9a9a9a;border-top:1px solid #c8c8c8"></div>
<svg style="left:416px;top:930px" width="20" height="6"><path d="M1 1L3 3.5L5 1" fill="none" stroke="#000" stroke-width="1"/><path d="M11 5H17L14 1Z" fill="#000"/></svg>
<svg style="left:418px;top:180px;overflow:hidden" width="540" height="331" viewBox="418 180 540 331">
<defs><filter id="n1" x="-10%" y="-10%" width="120%" height="120%"><feTurbulence type="fractalNoise" baseFrequency="1.1" numOctaves="2" seed="1"/><feColorMatrix values="0 0 0 0 0  0 0 0 0 0  0 0 0 0 0  0 0 0 -3 1.6"/><feComposite in2="SourceGraphic" operator="in"/></filter>
<filter id="b1" x="-10%" y="-10%" width="120%" height="120%"><feGaussianBlur stdDeviation="0.8"/></filter><filter id="bb1" x="-20%" y="-20%" width="140%" height="140%"><feGaussianBlur stdDeviation="2.5"/></filter></defs>
<rect x="418" y="180" width="540" height="331" fill="#000"/>
<path d="M688.8 226.0 C691.2 226.0 693.3 233.0 696.0 238.0 C698.7 243.0 699.2 252.5 705.0 256.0 C710.8 259.5 721.8 256.8 731.0 259.0 C740.2 261.2 752.7 264.8 760.0 269.0 C767.3 273.2 770.3 275.5 775.0 284.0 C779.7 292.5 784.5 306.8 788.0 320.0 C791.5 333.2 794.2 348.7 796.0 363.0 C797.8 377.3 799.0 392.7 798.5 406.0 C798.0 419.3 796.1 432.5 793.0 443.0 C789.9 453.5 786.7 461.8 780.0 469.0 C773.3 476.2 763.4 481.7 753.0 486.0 C742.6 490.3 728.2 493.2 717.5 494.9 C706.8 496.6 698.4 496.3 688.8 496.3 C679.2 496.3 670.8 496.6 660.1 494.9 C649.4 493.2 635.0 490.3 624.6 486.0 C614.2 481.7 604.3 476.2 597.6 469.0 C590.9 461.8 587.7 453.5 584.6 443.0 C581.5 432.5 579.6 419.3 579.1 406.0 C578.6 392.7 579.8 377.3 581.6 363.0 C583.3 348.7 586.1 333.2 589.6 320.0 C593.1 306.8 597.9 292.5 602.6 284.0 C607.3 275.5 610.3 273.2 617.6 269.0 C624.9 264.8 637.4 261.2 646.6 259.0 C655.8 256.8 666.8 259.5 672.6 256.0 C678.4 252.5 678.9 243.0 681.6 238.0 C684.3 233.0 686.4 226.0 688.8 226.0Z" fill="#868686" stroke="#d0d0d0" stroke-width="3" filter="url(#b1)"/>
<path d="M688.8 226.0 C691.2 226.0 693.3 233.0 696.0 238.0 C698.7 243.0 699.2 252.5 705.0 256.0 C710.8 259.5 721.8 256.8 731.0 259.0 C740.2 261.2 752.7 264.8 760.0 269.0 C767.3 273.2 770.3 275.5 775.0 284.0 C779.7 292.5 784.5 306.8 788.0 320.0 C791.5 333.2 794.2 348.7 796.0 363.0 C797.8 377.3 799.0 392.7 798.5 406.0 C798.0 419.3 796.1 432.5 793.0 443.0 C789.9 453.5 786.7 461.8 780.0 469.0 C773.3 476.2 763.4 481.7 753.0 486.0 C742.6 490.3 728.2 493.2 717.5 494.9 C706.8 496.6 698.4 496.3 688.8 496.3 C679.2 496.3 670.8 496.6 660.1 494.9 C649.4 493.2 635.0 490.3 624.6 486.0 C614.2 481.7 604.3 476.2 597.6 469.0 C590.9 461.8 587.7 453.5 584.6 443.0 C581.5 432.5 579.6 419.3 579.1 406.0 C578.6 392.7 579.8 377.3 581.6 363.0 C583.3 348.7 586.1 333.2 589.6 320.0 C593.1 306.8 597.9 292.5 602.6 284.0 C607.3 275.5 610.3 273.2 617.6 269.0 C624.9 264.8 637.4 261.2 646.6 259.0 C655.8 256.8 666.8 259.5 672.6 256.0 C678.4 252.5 678.9 243.0 681.6 238.0 C684.3 233.0 686.4 226.0 688.8 226.0Z" fill="#9a9a9a" filter="url(#n1)" opacity="0.16"/>
<path d="M688.8 283.0 C693.2 283.0 698.1 305.0 702.0 311.0 C705.9 317.0 704.2 317.7 712.0 319.0 C719.8 320.3 740.3 316.0 749.0 319.0 C757.7 322.0 760.5 327.3 764.0 337.0 C767.5 346.7 769.5 364.0 770.0 377.0 C770.5 390.0 769.5 402.8 767.0 415.0 C764.5 427.2 760.3 441.0 755.0 450.0 C749.7 459.0 743.6 464.7 735.0 469.0 C726.4 473.3 710.9 474.8 703.2 476.0 C695.5 477.2 693.6 476.0 688.8 476.0 C684.0 476.0 682.1 477.2 674.4 476.0 C666.7 474.8 651.2 473.3 642.6 469.0 C634.0 464.7 627.9 459.0 622.6 450.0 C617.3 441.0 613.1 427.2 610.6 415.0 C608.1 402.8 607.1 390.0 607.6 377.0 C608.1 364.0 610.1 346.7 613.6 337.0 C617.1 327.3 619.9 322.0 628.6 319.0 C637.3 316.0 657.8 320.3 665.6 319.0 C673.4 317.7 671.7 317.0 675.6 311.0 C679.5 305.0 684.4 283.0 688.8 283.0Z" fill="#141414" stroke="#5a5a5a" stroke-width="2" filter="url(#b1)"/>
<path d="M618 300Q636 262 688.8 262Q741 262 759 300L747 320L630 320Z" fill="#5a5a5a" filter="url(#b1)"/>
<path d="M612 296Q625 270 650 265L640 300L620 318Z" fill="#cfcfcf" filter="url(#b1)" opacity=".8"/>
<path d="M765 296Q752 270 727 265L737 300L757 318Z" fill="#cfcfcf" filter="url(#b1)" opacity=".8"/>
<circle cx="654.5" cy="291.6" r="22.5" fill="none" stroke="#d4d4d4" stroke-width="5" filter="url(#b1)"/>
<circle cx="654.5" cy="292" r="18" fill="#3e3e3e"/>
<circle cx="654.5" cy="294" r="12" fill="#262626" filter="url(#bb1)"/>
<circle cx="654.5" cy="291.6" r="15" fill="none" stroke="#777" stroke-width="1.5" filter="url(#b1)"/>
<circle cx="723.2" cy="291.6" r="22.5" fill="none" stroke="#d4d4d4" stroke-width="5" filter="url(#b1)"/>
<circle cx="723.2" cy="292" r="18" fill="#3e3e3e"/>
<circle cx="723.2" cy="294" r="12" fill="#262626" filter="url(#bb1)"/>
<circle cx="723.2" cy="291.6" r="15" fill="none" stroke="#777" stroke-width="1.5" filter="url(#b1)"/>
<path d="M683 262L688.8 230L694.5 262L692 300H685.6Z" fill="#aaa" filter="url(#b1)"/>
<ellipse cx="618" cy="247" rx="8" ry="11" fill="#e4e4e4" filter="url(#b1)"/>
<path d="M797 372Q810 376 807 392L801 440Q795 446 793 436Z" fill="#aaa" filter="url(#b1)"/>
<path d="M688.8 290.0 C692.5 290.0 696.5 307.7 700.0 313.0 C703.5 318.3 702.3 320.2 710.0 322.0 C717.7 323.8 738.2 321.0 746.0 324.0 C753.8 327.0 754.2 331.1 757.0 340.0 C759.8 348.9 762.4 365.1 763.0 377.5 C763.6 389.9 762.6 403.3 760.4 414.7 C758.2 426.1 754.7 437.9 750.0 446.0 C745.3 454.1 739.8 459.1 732.0 463.0 C724.2 466.9 710.2 468.4 703.0 469.5 C695.8 470.6 693.5 469.5 688.8 469.5 C684.1 469.5 681.8 470.6 674.6 469.5 C667.4 468.4 653.4 466.9 645.6 463.0 C637.8 459.1 632.3 454.1 627.6 446.0 C622.9 437.9 619.4 426.1 617.2 414.7 C615.0 403.3 614.0 389.9 614.6 377.5 C615.2 365.1 617.8 348.9 620.6 340.0 C623.4 331.1 623.8 327.0 631.6 324.0 C639.4 321.0 659.9 323.8 667.6 322.0 C675.3 320.2 674.1 318.3 677.6 313.0 C681.1 307.7 685.1 290.0 688.8 290.0Z" fill="#7be2e2"/>
<path d="M643.0 343.0 L660.0 336.0 L672.0 334.0 L686.0 348.0 L688.8 360.0 L692.0 348.0 L705.0 334.0 L717.0 336.0 L734.0 343.0 L738.0 360.0 L730.0 378.0 L736.0 395.0 L740.0 404.0 L724.0 412.0 L738.0 432.0 L722.0 438.0 L706.0 428.0 L698.0 437.0 L688.8 438.0 L679.0 437.0 L671.0 428.0 L655.0 438.0 L639.0 432.0 L653.0 412.0 L637.0 404.0 L641.0 395.0 L647.0 378.0 L639.0 360.0Z" fill="#f8c8b0"/>
<path d="M652 447Q688 430 726 447L723 453Q688 440 655 453Z" fill="#f8c8b0"/>
<path d="M662 459Q688 450 714 459L711 465Q688 457 665 465Z" fill="#f8c8b0"/>
<path d="M652 350Q660 340 672 343L670 360L657 368Q650 360 652 350Z" fill="#74d474"/>
<path d="M725 350Q717 340 706 343L708 360L721 369Q728 360 725 350Z" fill="#74d474"/>
<path d="M675 343L682 342L684 366L679 367Z" fill="#dd7070"/>
<path d="M698 341L708 343L700 366L695 365Z" fill="#dd7070"/>
<rect x="688" y="335" width="2" height="16" fill="#fff"/><circle cx="673" cy="399" r="3" fill="#fff"/><circle cx="707" cy="399" r="3" fill="#fff"/><rect x="688" y="462" width="6" height="5" fill="#fff"/>
</svg>
<svg style="left:418px;top:596px;overflow:hidden" width="540" height="331" viewBox="418 596 540 331">
<defs><filter id="n2" x="-10%" y="-10%" width="120%" height="120%"><feTurbulence type="fractalNoise" baseFrequency="1.1" numOctaves="2" seed="2"/><feColorMatrix values="0 0 0 0 0  0 0 0 0 0  0 0 0 0 0  0 0 0 -3 1.6"/><feComposite in2="SourceGraphic" operator="in"/></filter>
<filter id="b2" x="-10%" y="-10%" width="120%" height="120%"><feGaussianBlur stdDeviation="0.8"/></filter><filter id="bb2" x="-20%" y="-20%" width="140%" height="140%"><feGaussianBlur stdDeviation="2.5"/></filter></defs>
<rect x="418" y="596" width="540" height="331" fill="#000"/>
<path d="M529.0 884.5 C529.4 878.1 530.5 859.0 531.5 846.2 C532.5 833.4 531.7 818.5 535.3 807.8 C538.9 797.1 546.0 792.0 553.2 782.2 C560.5 772.4 570.3 758.4 578.8 749.0 C587.3 739.6 595.0 732.8 604.4 726.0 C613.8 719.2 624.4 712.6 635.0 708.1 C645.6 703.6 657.6 700.9 668.3 699.2 C678.9 697.5 687.4 697.7 698.9 697.9 C710.4 698.1 724.5 697.8 737.3 700.4 C750.1 703.0 764.5 708.1 775.6 713.2 C786.7 718.3 796.0 724.3 803.7 731.1 C811.4 737.9 817.1 746.4 821.6 754.1 C826.1 761.8 829.1 769.0 830.6 777.1 C832.1 785.2 831.7 795.0 830.6 802.7 C829.5 810.4 826.3 815.9 824.2 823.1 C822.1 830.4 819.1 836.8 817.8 846.2 C816.5 855.6 815.6 868.8 816.5 879.4 C817.4 890.0 821.3 901.7 822.9 910.0 C824.5 918.3 825.5 925.8 826.0 929.0 L826.0 940.0 L527.0 940.0Z" fill="#7a7a7a" filter="url(#b2)"/>
<path d="M529.0 884.5 C529.4 878.1 530.5 859.0 531.5 846.2 C532.5 833.4 531.7 818.5 535.3 807.8 C538.9 797.1 546.0 792.0 553.2 782.2 C560.5 772.4 570.3 758.4 578.8 749.0 C587.3 739.6 595.0 732.8 604.4 726.0 C613.8 719.2 624.4 712.6 635.0 708.1 C645.6 703.6 657.6 700.9 668.3 699.2 C678.9 697.5 687.4 697.7 698.9 697.9 C710.4 698.1 724.5 697.8 737.3 700.4 C750.1 703.0 764.5 708.1 775.6 713.2 C786.7 718.3 796.0 724.3 803.7 731.1 C811.4 737.9 817.1 746.4 821.6 754.1 C826.1 761.8 829.1 769.0 830.6 777.1 C832.1 785.2 831.7 795.0 830.6 802.7 C829.5 810.4 826.3 815.9 824.2 823.1 C822.1 830.4 819.1 836.8 817.8 846.2 C816.5 855.6 815.6 868.8 816.5 879.4 C817.4 890.0 821.3 901.7 822.9 910.0 C824.5 918.3 825.5 925.8 826.0 929.0 L826.0 940.0 L527.0 940.0Z" fill="#aaa" filter="url(#n2)" opacity="0.18"/>
<path d="M600.0 728.0 C606.7 724.5 623.5 711.5 640.0 707.0 C656.5 702.5 682.7 701.5 699.0 701.0 C715.3 700.5 725.5 701.3 738.0 704.0 C750.5 706.7 763.7 712.0 774.0 717.0 C784.3 722.0 792.8 727.5 800.0 734.0 C807.2 740.5 812.7 748.7 817.0 756.0 C821.3 763.3 824.5 770.3 826.0 778.0 C827.5 785.7 827.0 794.7 826.0 802.0 C825.0 809.3 822.2 814.7 820.0 822.0 C817.8 829.3 814.3 836.5 813.0 846.0 C811.7 855.5 811.2 868.3 812.0 879.0 C812.8 889.7 816.3 901.7 818.0 910.0 C819.7 918.3 821.3 925.8 822.0 929.0" fill="none" stroke="#e0e0e0" stroke-width="2.5" filter="url(#b2)"/>
<path d="M615.0 728.0 C620.8 725.3 636.0 715.7 650.0 712.0 C664.0 708.3 684.3 706.5 699.0 706.0 C713.7 705.5 726.2 706.5 738.0 709.0 C749.8 711.5 760.7 716.3 770.0 721.0 C779.3 725.7 787.3 730.8 794.0 737.0 C800.7 743.2 806.0 750.8 810.0 758.0 C814.0 765.2 816.7 772.7 818.0 780.0 C819.3 787.3 819.0 795.0 818.0 802.0 C817.0 809.0 814.0 814.7 812.0 822.0 C810.0 829.3 807.2 836.5 806.0 846.0 C804.8 855.5 804.3 868.3 805.0 879.0 C805.7 889.7 808.7 901.7 810.0 910.0 C811.3 918.3 812.5 925.8 813.0 929.0" fill="none" stroke="#1a1a1a" stroke-width="2.5" filter="url(#b2)"/>
<path d="M630.0 730.0 C635.0 727.7 648.5 719.2 660.0 716.0 C671.5 712.8 686.0 711.5 699.0 711.0 C712.0 710.5 726.8 710.8 738.0 713.0 C749.2 715.2 757.7 719.5 766.0 724.0 C774.3 728.5 781.8 734.0 788.0 740.0 C794.2 746.0 799.3 753.3 803.0 760.0 C806.7 766.7 808.7 773.3 810.0 780.0 C811.3 786.7 811.7 793.3 811.0 800.0 C810.3 806.7 807.8 812.3 806.0 820.0 C804.2 827.7 801.2 836.2 800.0 846.0 C798.8 855.8 798.5 868.3 799.0 879.0 C799.5 889.7 801.8 901.7 803.0 910.0 C804.2 918.3 805.5 925.8 806.0 929.0" fill="none" stroke="#d8d8d8" stroke-width="2" filter="url(#b2)"/>
<path d="M636.0 738.0 C640.5 729.8 649.5 720.3 660.0 716.0 C670.5 711.7 686.0 712.3 699.0 712.0 C712.0 711.7 726.7 712.8 738.0 714.0 C749.3 715.2 758.3 715.8 767.0 719.0 C775.7 722.2 783.2 727.5 790.0 733.0 C796.8 738.5 803.2 745.5 808.0 752.0 C812.8 758.5 817.0 764.8 819.0 772.0 C821.0 779.2 821.3 788.8 820.0 795.0 C818.7 801.2 815.2 805.3 811.0 809.0 C806.8 812.7 800.0 813.8 795.0 817.0 C790.0 820.2 785.8 824.5 781.0 828.0 C776.2 831.5 771.2 835.8 766.0 838.0 C760.8 840.2 755.3 841.3 750.0 841.0 C744.7 840.7 740.2 839.2 734.0 836.0 C727.8 832.8 718.3 827.0 713.0 822.0 C707.7 817.0 705.8 811.5 702.0 806.0 C698.2 800.5 695.3 793.5 690.0 789.0 C684.7 784.5 676.7 782.0 670.0 779.0 C663.3 776.0 656.2 773.3 650.0 771.0 C643.8 768.7 635.3 770.5 633.0 765.0 C630.7 759.5 631.5 746.2 636.0 738.0Z" fill="#161616"/>
<path d="M533 800Q548 770 575 745Q610 722 640 735L660 770L700 806L698 832L640 836L600 830L532 836Z" fill="#c4c4c4" filter="url(#b2)"/>
<path d="M575 752Q600 736 630 742L645 765L615 772L585 770Z" fill="#f0f0f0" filter="url(#b2)"/>
<path d="M548 790Q575 770 610 778L625 800L600 815L552 812Z" fill="#e6e6e6" filter="url(#b2)"/>
<path d="M640 775Q660 770 680 790L695 815L670 822L650 805Z" fill="#f4f4f4" filter="url(#b2)"/>
<path d="M612 772Q626 768 636 780L640 800L628 808L614 795Z" fill="#2a2a2a" filter="url(#bb2)"/>
<path d="M660 745L700 760L712 790L690 795L670 770Z" fill="#1a1a1a" filter="url(#bb2)"/>
<path d="M535 818Q600 810 660 820L700 838L690 846L640 838L535 840Z" fill="#eeeeee" filter="url(#b2)"/>
<path d="M530 840Q580 826 640 828Q682 830 702 848L716 880L704 886L684 856Q650 842 600 846Q560 850 532 860Z" fill="#050505" filter="url(#b2)"/>
<path d="M533 862Q600 850 668 858L688 878L700 929H530Z" fill="#ababab" filter="url(#b2)"/>
<path d="M533 862Q600 850 668 858L688 878L700 929H530Z" fill="#ddd" filter="url(#n2)" opacity=".2"/>
<path d="M560 868Q600 860 650 868L640 878L570 880Z" fill="#e0e0e0" filter="url(#b2)"/>
<path d="M531 895Q560 890 590 905L610 929H530Z" fill="#3a3a3a" filter="url(#bb2)"/>
<path d="M655 812L700 822L728 845L744 929L702 929L690 872Z" fill="#2a2a2a" filter="url(#bb2)"/>
<path d="M700 842L735 852L748 929L712 929Z" fill="#c8c8c8" filter="url(#b2)" opacity=".8"/>
<path d="M700 842L735 852L748 929L712 929Z" fill="#fff" filter="url(#n2)" opacity=".2"/>
<path d="M798 812Q812 830 815 860L818 929H786L779 860Q775 835 772 822Z" fill="#f4f4f4" filter="url(#b2)"/>
<path d="M745 840L776 836L784 929H752Z" fill="#b0b0b0" filter="url(#b2)"/>
<path d="M745 840L776 836L784 929H752Z" fill="#eee" filter="url(#n2)" opacity=".25"/>
<path d="M642.7 741.3 C647.0 734.0 653.7 722.8 663.1 718.3 C672.5 713.8 686.5 714.7 698.9 714.5 C711.3 714.3 726.2 715.8 737.3 717.1 C748.4 718.4 757.3 719.0 765.4 722.2 C773.5 725.4 779.4 730.9 785.8 736.2 C792.2 741.5 799.0 748.1 803.7 754.1 C808.4 760.1 812.1 765.6 814.0 772.0 C815.9 778.4 816.5 787.0 815.2 792.5 C813.9 798.0 810.3 801.9 806.3 805.3 C802.3 808.7 795.7 809.9 791.0 812.9 C786.3 815.9 782.5 819.7 778.2 823.1 C773.9 826.5 770.1 831.3 765.4 833.4 C760.7 835.5 754.8 836.3 750.1 835.9 C745.4 835.5 742.8 833.8 737.3 830.8 C731.8 827.8 721.9 822.7 716.8 818.0 C711.7 813.3 710.4 808.2 706.6 802.7 C702.8 797.2 699.3 789.5 693.8 784.8 C688.3 780.1 680.2 777.6 673.4 774.6 C666.6 771.6 658.9 769.0 652.9 766.9 C646.9 764.8 639.3 766.1 637.6 761.8 C635.9 757.5 638.5 748.5 642.7 741.3Z" fill="#7be2e2" stroke="#fff" stroke-width="2"/>
<path d="M690.0 746.0 C691.5 743.7 704.5 745.0 712.0 746.0 C719.5 747.0 729.0 749.3 735.0 752.0 C741.0 754.7 746.3 759.0 748.0 762.0 C749.7 765.0 748.0 770.0 745.0 770.0 C742.0 770.0 735.5 764.0 730.0 762.0 C724.5 760.0 715.0 755.8 712.0 758.0 C709.0 760.2 708.2 771.7 712.0 775.0 C715.8 778.3 726.2 777.5 735.0 778.0 C743.8 778.5 756.7 776.0 765.0 778.0 C773.3 780.0 780.8 785.5 785.0 790.0 C789.2 794.5 790.0 800.0 790.0 805.0 C790.0 810.0 788.7 815.5 785.0 820.0 C781.3 824.5 773.8 829.3 768.0 832.0 C762.2 834.7 755.2 836.3 750.0 836.0 C744.8 835.7 742.3 833.5 737.0 830.0 C731.7 826.5 722.8 820.0 718.0 815.0 C713.2 810.0 711.0 805.0 708.0 800.0 C705.0 795.0 702.2 790.0 700.0 785.0 C697.8 780.0 694.5 774.2 695.0 770.0 C695.5 765.8 703.8 764.0 703.0 760.0 C702.2 756.0 688.5 748.3 690.0 746.0Z" fill="#f8c8b0"/>
<g stroke="#fff" stroke-width="2.2" fill="none"><path d="M648 744L662 748"/><path d="M660 730L672 734M700 724L702 745M726 735L740 733M765 732L775 727M790 748L782 775M795 780L800 790M705 762L712 775M660 758L668 762"/></g>
</svg>
<svg style="left:966px;top:596px;overflow:hidden" width="540" height="331" viewBox="966 596 540 331">
<defs><filter id="n3" x="-10%" y="-10%" width="120%" height="120%"><feTurbulence type="fractalNoise" baseFrequency="1.1" numOctaves="2" seed="3"/><feColorMatrix values="0 0 0 0 0  0 0 0 0 0  0 0 0 0 0  0 0 0 -3 1.6"/><feComposite in2="SourceGraphic" operator="in"/></filter>
<filter id="b3" x="-10%" y="-10%" width="120%" height="120%"><feGaussianBlur stdDeviation="0.8"/></filter><filter id="bb3" x="-20%" y="-20%" width="140%" height="140%"><feGaussianBlur stdDeviation="2.5"/></filter></defs>
<rect x="966" y="596" width="540" height="331" fill="#000"/>
<path d="M1117.5 900.0 C1117.3 891.6 1116.1 864.0 1116.1 849.5 C1116.1 835.0 1116.0 826.2 1117.4 812.7 C1118.8 799.2 1121.4 780.8 1124.7 768.5 C1128.0 756.2 1131.3 748.0 1137.0 739.0 C1142.7 730.0 1149.2 720.4 1159.0 714.5 C1168.8 708.6 1182.4 705.8 1195.9 703.5 C1209.4 701.2 1225.7 700.8 1240.0 701.0 C1254.3 701.2 1268.6 702.0 1281.7 704.7 C1294.8 707.4 1309.5 712.1 1318.5 717.0 C1327.5 721.9 1331.2 729.3 1335.7 734.2 C1340.2 739.1 1342.6 739.5 1345.5 746.4 C1348.4 753.3 1351.3 764.8 1352.9 775.9 C1354.5 787.0 1355.3 800.4 1355.3 812.7 C1355.3 825.0 1354.3 835.0 1352.9 849.5 C1351.5 864.0 1349.2 886.8 1347.0 900.0 C1344.8 913.2 1341.2 924.2 1340.0 929.0 L1340.0 940.0 L1120.0 940.0Z" fill="#929292" stroke="#d8d8d8" stroke-width="2.5" filter="url(#b3)"/>
<path d="M1117.5 900.0 C1117.3 891.6 1116.1 864.0 1116.1 849.5 C1116.1 835.0 1116.0 826.2 1117.4 812.7 C1118.8 799.2 1121.4 780.8 1124.7 768.5 C1128.0 756.2 1131.3 748.0 1137.0 739.0 C1142.7 730.0 1149.2 720.4 1159.0 714.5 C1168.8 708.6 1182.4 705.8 1195.9 703.5 C1209.4 701.2 1225.7 700.8 1240.0 701.0 C1254.3 701.2 1268.6 702.0 1281.7 704.7 C1294.8 707.4 1309.5 712.1 1318.5 717.0 C1327.5 721.9 1331.2 729.3 1335.7 734.2 C1340.2 739.1 1342.6 739.5 1345.5 746.4 C1348.4 753.3 1351.3 764.8 1352.9 775.9 C1354.5 787.0 1355.3 800.4 1355.3 812.7 C1355.3 825.0 1354.3 835.0 1352.9 849.5 C1351.5 864.0 1349.2 886.8 1347.0 900.0 C1344.8 913.2 1341.2 924.2 1340.0 929.0 L1340.0 940.0 L1120.0 940.0Z" fill="#aaa" filter="url(#n3)" opacity="0.16"/>
<path d="M1240.0 713.5 C1251.0 713.3 1262.5 712.1 1272.0 715.0 C1281.5 717.9 1290.5 724.5 1297.0 731.0 C1303.5 737.5 1308.2 746.3 1311.0 754.0 C1313.8 761.7 1313.8 769.3 1314.0 777.0 C1314.2 784.7 1316.0 788.7 1312.0 800.0 C1308.0 811.3 1302.0 836.7 1290.0 845.0 C1278.0 853.3 1257.0 850.0 1240.0 850.0 C1223.0 850.0 1200.8 853.3 1188.0 845.0 C1175.2 836.7 1167.5 811.3 1163.0 800.0 C1158.5 788.7 1160.8 785.3 1161.0 777.0 C1161.2 768.7 1161.2 758.0 1164.0 750.0 C1166.8 742.0 1171.0 734.7 1178.0 729.0 C1185.0 723.3 1195.7 718.6 1206.0 716.0 C1216.3 713.4 1229.0 713.7 1240.0 713.5Z" fill="#151515" stroke="#333" stroke-width="1.5"/>
<path d="M1121 812Q1150 800 1176 832L1186 929H1124L1118 880Z" fill="#e8e8e8" filter="url(#b3)"/>
<path d="M1121 812Q1150 800 1176 832L1186 929H1124L1118 880Z" fill="#fff" filter="url(#n3)" opacity="0.18"/>
<path d="M1118 818Q1135 812 1147 828L1142 860L1120 866Z" fill="#151515" filter="url(#bb3)"/>
<path d="M1352 815Q1325 805 1294 832L1288 929H1340L1350 880Z" fill="#e8e8e8" filter="url(#b3)"/>
<path d="M1352 815Q1325 805 1294 832L1288 929H1340L1350 880Z" fill="#fff" filter="url(#n3)" opacity="0.18"/>
<path d="M1354 820Q1342 815 1335 830L1338 872L1353 874Z" fill="#222" filter="url(#bb3)"/>
<path d="M1188 836L1240 834L1292 836L1300 929H1180Z" fill="#9a9a9a" filter="url(#b3)"/>
<path d="M1188 836L1240 834L1292 836L1300 929H1180Z" fill="#ccc" filter="url(#n3)" opacity="0.23"/>
<path d="M1228 845Q1240 838 1252 845L1256 929H1224Z" fill="#555" filter="url(#bb3)"/>
<path d="M1162 800L1200 805L1212 830L1205 846L1180 842L1160 825Z" fill="#000" filter="url(#b3)"/>
<path d="M1318 800L1280 805L1268 830L1275 846L1300 842L1320 825Z" fill="#000" filter="url(#b3)"/>
<path d="M1180 797L1206 806L1214 822L1200 822Z" fill="#fff"/><path d="M1300 797L1275 806L1270 818L1286 812Z" fill="#fff"/>
<path d="M1206.5 718.6 C1214.1 717.1 1229.6 717.3 1240.0 717.5 C1250.4 717.7 1262.4 718.0 1269.0 720.0 C1275.6 722.0 1275.4 725.5 1279.6 729.3 C1283.8 733.1 1290.0 738.2 1294.2 742.6 C1298.4 747.0 1302.6 751.0 1304.9 755.9 C1307.2 760.8 1307.9 766.3 1308.2 771.8 C1308.5 777.3 1308.0 784.8 1306.8 789.0 C1305.6 793.2 1304.3 795.4 1300.9 797.0 C1297.5 798.6 1290.4 797.1 1286.2 798.4 C1282.0 799.7 1278.0 801.7 1275.6 805.0 C1273.2 808.3 1273.1 815.4 1271.6 818.3 C1270.0 821.2 1269.4 820.5 1266.3 822.3 C1263.2 824.1 1256.1 827.0 1253.0 829.0 C1249.9 831.0 1251.2 833.4 1247.7 834.3 C1244.2 835.2 1235.3 835.4 1231.8 834.3 C1228.2 833.2 1229.5 829.8 1226.4 827.6 C1223.3 825.4 1216.5 823.9 1213.2 821.0 C1209.9 818.1 1210.0 813.2 1206.5 810.3 C1203.0 807.4 1197.0 805.5 1191.9 803.7 C1186.8 801.9 1180.0 802.2 1176.0 799.7 C1172.0 797.2 1169.6 793.6 1168.0 789.0 C1166.4 784.4 1166.2 777.5 1166.6 771.8 C1167.0 766.0 1168.4 760.0 1170.6 754.5 C1172.8 749.0 1176.0 743.2 1180.0 738.6 C1184.0 734.0 1190.2 729.9 1194.6 726.6 C1199.0 723.3 1198.9 720.1 1206.5 718.6Z" fill="#7be2e2"/>
<path d="M1200.0 745.0 L1215.0 741.0 L1222.0 745.0 L1224.0 758.0 L1240.0 763.0 L1256.0 758.0 L1258.0 745.0 L1265.0 741.0 L1280.0 745.0 L1285.0 758.0 L1290.0 770.0 L1298.0 778.0 L1296.0 792.0 L1286.0 795.0 L1275.0 790.0 L1270.0 800.0 L1270.0 818.0 L1258.0 828.0 L1240.0 834.0 L1222.0 828.0 L1208.0 818.0 L1207.0 800.0 L1196.0 792.0 L1180.0 796.0 L1172.0 790.0 L1180.0 776.0 L1190.0 765.0 L1195.0 752.0Z" fill="#f8c8b0"/>
<path d="M1216 772L1240 770L1260 772L1260 789L1240 786L1216 789Z" fill="#7be2e2"/>
<path d="M1212 758L1222 752L1225 767L1212 770Z" fill="#7be2e2"/><path d="M1268 758L1258 752L1255 767L1268 770Z" fill="#7be2e2"/>
<path d="M1192 784L1200 780L1204 790L1194 795Z" fill="#7be2e2"/><path d="M1282 784L1276 780L1272 790L1280 793Z" fill="#7be2e2"/>
<path d="M1234 806L1246 806L1240 814Z" fill="#7be2e2"/><path d="M1216 820L1226 818L1228 830Z" fill="#7be2e2"/><path d="M1262 818L1254 820L1256 828Z" fill="#7be2e2"/>
<rect x="1204" y="778" width="5" height="8" fill="#5a9ae8"/><rect x="1266" y="778" width="6" height="5" fill="#5a9ae8"/>
<g fill="#fff"><rect x="1218" y="759" width="3" height="3"/><rect x="1252" y="758" width="6" height="4"/><rect x="1216" y="728" width="3" height="2"/><rect x="1236" y="738" width="2" height="2"/><rect x="1237" y="718" width="5" height="2"/><rect x="1248" y="782" width="2" height="3"/></g>
</svg>
<svg style="left:963px;top:99px;overflow:hidden" width="544" height="411" viewBox="963 99 544 411">
<g fill="none" stroke="#ff00ff" stroke-width="1.2">
<rect x="1043" y="112.5" width="384.5" height="384"/>
<rect x="1106.5" y="176.5" width="257" height="256.5"/>
<path d="M1043 112.5L1106.5 176.5M1427.5 112.5L1363.5 176.5M1043 496.5L1106.5 433M1427.5 496.5L1363.5 433"/>
</g>
<g fill="#fff" font-family="Liberation Sans" font-size="23.5" text-anchor="middle">
<text x="1245" y="122">S</text>
<text x="1062" y="306">R</text>
<text x="1429" y="306.5">L</text>
<rect x="1239" y="473" width="3" height="18.5"/>
<text x="1237.5" y="306" font-size="20" text-anchor="start">P</text>
<text x="1248" y="306" font-size="29">A</text>
</g></svg>
<div class="t" style="left:422.5px;top:179.5px;font-size:15px;line-height:15px;color:#fff;letter-spacing:-0.4px">Bg I: 246<br>Bg J: 18<br>Bg K: 127</div>
<div class="a" style="left:880px;top:205px;width:78px;height:15px;overflow:hidden"><div class="t" style="left:5.5px;top:6px;font-size:14.5px;color:#fff;letter-spacing:0.2px">Sp: 0.5mm</div></div>
<div class="a" style="left:521px;top:180px;width:8px;height:1px;background:#7be2e2"></div>
<svg style="left:848px;top:180px" width="10" height="8"><path d="M0 0H10V8H5V6H3V4H1V0Z" fill="#7be2e2"/></svg>
<div class="a" style="left:3px;top:98px;width:405px;height:841px;background:#fff"></div>
<svg style="left:8px;top:100px" width="68" height="68" viewBox="0 0 68 68">
<defs><radialGradient id="sph" cx="0.35" cy="0.35" r="0.75"><stop offset="0" stop-color="#f4f4fa"/><stop offset="0.55" stop-color="#a8a8c0"/><stop offset="1" stop-color="#5a3a3a"/></radialGradient>
<radialGradient id="shd" cx="0.5" cy="0.5" r="0.5"><stop offset="0" stop-color="#000" stop-opacity=".35"/><stop offset="1" stop-color="#000" stop-opacity="0"/></radialGradient></defs>
<ellipse cx="40" cy="40" rx="24" ry="22" fill="url(#shd)"/>
<g fill="none" stroke="#aaa" stroke-width=".8"><path d="M3 30L28 12L34 6L34 60L18 66L18 18"/><path d="M3 30L62 28L50 46L16 46Z"/></g>
<circle cx="34" cy="33" r="19" fill="url(#sph)"/>
<path d="M34 14A19 19 0 0 1 52 28L52 36L34 36Z" fill="#4a5070"/>
<rect x="37" y="19" width="11" height="13" fill="#222"/>
<g><rect x="38" y="20" width="3" height="3" fill="#e22"/><rect x="41" y="20" width="3" height="3" fill="#fc0"/><rect x="44" y="20" width="3" height="3" fill="#2c2"/><rect x="38" y="23" width="3" height="3" fill="#f80"/><rect x="41" y="23" width="3" height="3" fill="#e22"/><rect x="44" y="23" width="3" height="3" fill="#fc0"/><rect x="38" y="26" width="3" height="3" fill="#22e"/><rect x="41" y="26" width="3" height="3" fill="#2c2"/><rect x="44" y="26" width="3" height="3" fill="#f80"/></g>
<path d="M34 36L52 36A19 19 0 0 1 34 52Z" fill="#8a8aa8" opacity=".6"/>
</svg>
<div class="t" style="left:74px;top:123.5px;font-size:13px;letter-spacing:1.5px;color:#555">3D<span style="color:#222">Slicer</span></div>
<div class="a" style="left:5px;top:175px;width:400px;height:564px;border:1px solid #e2e0dc;border-right:2px solid #e2e0dc;border-bottom:2px solid #e2e0dc"></div>
<div class="a" style="left:9px;top:180px;width:392px;height:17px;background:#dcdbe0;border-bottom:1px solid #8c8c8c"></div>
<div class="td" style="left:14.5px;top:183px"></div>
<div class="t" style="left:29px;top:182.97px;font-size:10.5px;letter-spacing:-0.1px">Help</div>
<div class="a" style="left:9px;top:197px;width:391px;height:3px;border-left:1px solid #9a9a9a;border-bottom:1px solid #9a9a9a;border-right:1px solid #d0d0d0"></div>
<div class="a" style="left:9px;top:206px;width:392px;height:17px;background:#dcdbe0;border-bottom:1px solid #8c8c8c"></div>
<div class="tu" style="left:14.5px;top:209px"></div>
<div class="t" style="left:29px;top:208.97px;font-size:10.5px;letter-spacing:-0.1px">Wizard</div>
<div class="a" style="left:9px;top:223px;width:391px;height:421px;border-left:1px solid #9a9a9a;border-right:1px solid #9a9a9a;border-bottom:2px solid #9a9a9a"></div>
<div class="a" style="left:13px;top:227px;width:384px;height:43px;background:#e3e3fb;border-bottom:1px solid #8a8a8a"></div>
<div class="t" style="left:19.6px;top:231.97px;font-size:10.5px;font-weight:bold;letter-spacing:-0.03px">9/9. Run Segmentation</div>
<div class="t" style="left:34px;top:252.77px;font-size:10.5px;letter-spacing:-0.04px">Apply EM algorithm to segment target image.</div>
<div class="a" style="left:13.5px;top:280px;width:382px;height:41px;border:1px solid #9a9a9a;border-top:none;border-right-color:#a8a8a8"></div>
<div class="a" style="left:13.5px;top:280px;width:4.5px;height:1px;background:#9a9a9a"></div>
<div class="a" style="left:107px;top:280px;width:272.5px;height:1px;background:#9a9a9a"></div>
<div class="a" style="left:391.5px;top:280px;width:4px;height:1px;background:#9a9a9a"></div>
<div class="t" style="left:21px;top:274.97px;font-size:10.5px;letter-spacing:-0.01px">Working Directory</div>
<svg style="left:381.5px;top:276px" width="9" height="8"><path d="M0.7 0.7L8.3 7.3M8.3 0.7L0.7 7.3" stroke="#000" stroke-width="1.6"/></svg>
<div class="t" style="left:22.6px;top:297.90px;font-size:10px;letter-spacing:-0.05px">Save Intermediate Results</div>
<div class="a" style="left:139px;top:298px;width:11px;height:10px;background:#c9d4e3;border:1px solid #b0b0b8"></div>
<div class="a" style="left:154px;top:294px;width:146px;height:22px;background:#fff;border-top:1px solid #9a9a9a;border-left:1px solid #9a9a9a;box-shadow:inset -1px -1px 0 #9a9a9a"></div>
<svg style="left:161px;top:300px" width="17" height="13"><path d="M1 4Q1 2 3 2H7L8 3.5H14V12H2Z" fill="#ddd" stroke="#666" stroke-width=".6"/><path d="M1 6H15L14 12H2Z" fill="#e8e848" stroke="#000" stroke-width=".8"/><path d="M15 6V12" stroke="#000" stroke-width="1.5"/></svg>
<div class="t" style="left:180.6px;top:300.77px;font-size:10.5px;letter-spacing:-0.08px">Select Working Directory</div>
<div class="a" style="left:13.5px;top:334.5px;width:382px;height:46px;border:1px solid #9a9a9a;border-top:none;border-right-color:#a8a8a8"></div>
<div class="a" style="left:13.5px;top:334.5px;width:5.100000000000001px;height:1px;background:#9a9a9a"></div>
<div class="a" style="left:101.6px;top:334.5px;width:277.9px;height:1px;background:#9a9a9a"></div>
<div class="a" style="left:391.5px;top:334.5px;width:4px;height:1px;background:#9a9a9a"></div>
<div class="t" style="left:21.6px;top:329.47px;font-size:10.5px;letter-spacing:-0.2px">Output Labelmap</div>
<svg style="left:381.5px;top:330.5px" width="9" height="8"><path d="M0.7 0.7L8.3 7.3M8.3 0.7L0.7 7.3" stroke="#000" stroke-width="1.6"/></svg>
<div class="t" style="left:24.5px;top:354.27px;font-size:10.5px;letter-spacing:-0.2px">Output Labelmap:</div>
<div class="a" style="left:111px;top:350px;width:122px;height:24px;background:#fff;border-top:1px solid #a8a8a8;border-left:1px solid #a8a8a8;border-right:2px solid #c0c0c0;border-bottom:2px solid #c0c0c0"></div>
<div class="t" style="left:118.2px;top:356.97px;font-size:10.5px;letter-spacing:-0.05px">EM Segmentation</div>
<div class="a" style="left:212px;top:360px;width:14px;height:4px;background:#e6e6e6;border:1px solid #b0b0b0;border-top-color:#f8f8f8"></div>
<div class="a" style="left:234px;top:350px;width:13px;height:12px;border-left:1px solid #c8c8c8;border-bottom:1px solid #c8c8c8"></div>
<div class="a" style="left:234px;top:362px;width:13px;height:12px;border-left:1px solid #c8c8c8;border-bottom:1px solid #c8c8c8"></div>
<div class="tu" style="left:236.5px;top:355px"></div><div class="td" style="left:236.5px;top:367px"></div>
<div class="a" style="left:15.5px;top:393.5px;width:379px;height:38px;border:1px solid #9a9a9a;border-top:none;border-right-color:#a8a8a8"></div>
<div class="a" style="left:15.5px;top:393.5px;width:5.100000000000001px;height:1px;background:#9a9a9a"></div>
<div class="a" style="left:43.6px;top:393.5px;width:334.9px;height:1px;background:#9a9a9a"></div>
<div class="a" style="left:390.5px;top:393.5px;width:4px;height:1px;background:#9a9a9a"></div>
<div class="t" style="left:23.6px;top:388.47px;font-size:10.5px;letter-spacing:-0.2px">ROI</div>
<svg style="left:380.5px;top:389.5px" width="9" height="8"><path d="M0.7 0.7L8.3 7.3M8.3 0.7L0.7 7.3" stroke="#000" stroke-width="1.6"/></svg>
<div class="t" style="left:24.7px;top:410.97px;font-size:10.5px;letter-spacing:-0.08px">Min (i,j,k):</div>
<div class="a" style="left:70.3px;top:408px;width:30px;height:18px;background:#fff;border-top:2px solid #a0a0a0;border-left:2px solid #a0a0a0;border-right:2px solid #dcdcdc;border-bottom:2px solid #dcdcdc"></div>
<div class="t" style="left:72.3px;top:411.97px;font-size:10.5px;">0</div>
<div class="a" style="left:102px;top:408px;width:30px;height:18px;background:#fff;border-top:2px solid #a0a0a0;border-left:2px solid #a0a0a0;border-right:2px solid #dcdcdc;border-bottom:2px solid #dcdcdc"></div>
<div class="t" style="left:104px;top:411.97px;font-size:10.5px;">0</div>
<div class="a" style="left:134.3px;top:408px;width:30px;height:18px;background:#fff;border-top:2px solid #a0a0a0;border-left:2px solid #a0a0a0;border-right:2px solid #dcdcdc;border-bottom:2px solid #dcdcdc"></div>
<div class="t" style="left:136.3px;top:411.97px;font-size:10.5px;">0</div>
<div class="t" style="left:236.5px;top:410.97px;font-size:10.5px;letter-spacing:-0.02px">Max (i,j,k):</div>
<div class="a" style="left:294.2px;top:408px;width:30px;height:18px;background:#fff;border-top:2px solid #a0a0a0;border-left:2px solid #a0a0a0;border-right:2px solid #dcdcdc;border-bottom:2px solid #dcdcdc"></div>
<div class="t" style="left:296.2px;top:411.97px;font-size:10.5px;">256</div>
<div class="a" style="left:326.2px;top:408px;width:30px;height:18px;background:#fff;border-top:2px solid #a0a0a0;border-left:2px solid #a0a0a0;border-right:2px solid #dcdcdc;border-bottom:2px solid #dcdcdc"></div>
<div class="t" style="left:328.2px;top:411.97px;font-size:10.5px;">256</div>
<div class="a" style="left:358.2px;top:408px;width:30px;height:18px;background:#fff;border-top:2px solid #a0a0a0;border-left:2px solid #a0a0a0;border-right:2px solid #dcdcdc;border-bottom:2px solid #dcdcdc"></div>
<div class="t" style="left:360.2px;top:411.97px;font-size:10.5px;">252</div>
<div class="a" style="left:15.5px;top:444.5px;width:379px;height:36px;border:1px solid #9a9a9a;border-top:none;border-right-color:#a8a8a8"></div>
<div class="a" style="left:15.5px;top:444.5px;width:5.100000000000001px;height:1px;background:#9a9a9a"></div>
<div class="a" style="left:49.6px;top:444.5px;width:328.9px;height:1px;background:#9a9a9a"></div>
<div class="a" style="left:390.5px;top:444.5px;width:4px;height:1px;background:#9a9a9a"></div>
<div class="t" style="left:23.6px;top:439.47px;font-size:10.5px;letter-spacing:-0.2px">Misc.</div>
<svg style="left:380.5px;top:440.5px" width="9" height="8"><path d="M0.7 0.7L8.3 7.3M8.3 0.7L0.7 7.3" stroke="#000" stroke-width="1.6"/></svg>
<div class="t" style="left:24.7px;top:461.90px;font-size:10px;letter-spacing:0.1px">Multi-threading Enabled:</div>
<div class="a" style="left:177px;top:461px;width:11px;height:11px;background:#a8b8d0;border:1px solid #000"></div>
<svg style="left:178px;top:462px" width="9" height="9"><path d="M1.5 4.5L3.8 7L8 1.2" fill="none" stroke="#000" stroke-width="1.6"/></svg>
<div class="a" style="left:13px;top:615px;width:384px;height:2px;background:#9a9a9a;border-bottom:1px solid #e8e8e8"></div>
<div class="a" style="left:91.4px;top:619px;width:57px;height:21px;background:#fff;border-top:1px solid #a8a8a8;border-left:1px solid #a8a8a8;box-shadow:inset -2px -2px 0 #9a9a9a"><div class="t" style="left:0;width:100%;text-align:center;top:5px;font-size:10.5px;color:#000">&lt; Back</div></div>
<div class="a" style="left:149.6px;top:619px;width:57px;height:21px;background:#fff;border-top:1px solid #a8a8a8;border-left:1px solid #a8a8a8;box-shadow:inset -2px -2px 0 #9a9a9a"><div class="t" style="left:0;width:100%;text-align:center;top:5px;font-size:10.5px;color:#9a9a9a">Next &gt;</div></div>
<div class="a" style="left:211px;top:619px;width:58px;height:21px;background:#fff;border-top:1px solid #a8a8a8;border-left:1px solid #a8a8a8;box-shadow:inset -2px -2px 0 #9a9a9a"><div class="t" style="left:0;width:100%;text-align:center;top:5px;font-size:10.5px;color:#000">Run</div></div>
<div class="a" style="left:277.3px;top:619px;width:57px;height:21px;background:#fff;border-top:1px solid #a8a8a8;border-left:1px solid #a8a8a8;box-shadow:inset -2px -2px 0 #9a9a9a"><div class="t" style="left:0;width:100%;text-align:center;top:5px;font-size:10.5px;color:#000">Cancel</div></div>
<div class="a" style="left:339.2px;top:619px;width:58px;height:21px;background:#fff;border-top:1px solid #a8a8a8;border-left:1px solid #a8a8a8;box-shadow:inset -2px -2px 0 #9a9a9a"><div class="t" style="left:0;width:100%;text-align:center;top:5px;font-size:10.5px;color:#000">Help</div></div>
<div class="a" style="left:6px;top:740px;width:398px;height:3px;background:#e3e3fb"></div>
<div class="a" style="left:6px;top:747px;width:398px;height:20px;background:#dcdbe0;border-bottom:1px solid #8c8c8c"></div>
<div class="tu" style="left:11.5px;top:750px"></div>
<div class="t" style="left:26px;top:749.97px;font-size:10.5px;letter-spacing:-0.26px">Manipulate Slice Views</div>
<div class="a" style="left:6px;top:767px;width:397px;height:42px;border-left:1px solid #9a9a9a;border-right:1px solid #9a9a9a;border-bottom:2px solid #9a9a9a"></div>
<div class="a" style="left:6px;top:810px;width:398px;height:3px;background:#e3e3fb"></div>
<div class="a" style="left:6px;top:817px;width:398px;height:20px;background:#dcdbe0;border-bottom:1px solid #8c8c8c"></div>
<div class="tu" style="left:11.5px;top:820px"></div>
<div class="t" style="left:26px;top:819.97px;font-size:10.5px;letter-spacing:-0.15px">Manipulate 3D View</div>
<div class="a" style="left:6px;top:837px;width:397px;height:97px;border-left:1px solid #9a9a9a;border-right:1px solid #9a9a9a;border-bottom:2px solid #9a9a9a"></div>
<div class="a" style="left:6px;top:934px;width:398px;height:3px;background:#e3e3fb"></div>
<div class="a" style="left:407px;top:119px;width:4px;height:818px;background:#e0e0e0;border-left:1px solid #f0f0f0"></div>
<div class="a" style="left:409px;top:121px;width:2px;height:815px;background:#9a9a9a"></div>
<svg style="left:408px;top:101px" width="4" height="17"><path d="M3.5 0.5V5.5L0.5 3Z" fill="#000"/><path d="M0.5 11.5V16.5L3.5 14Z" fill="#000"/></svg>
<div class="ib" style="left:12px;top:779px;width:21px;height:21px;background:#acacac;"><svg style="left:0;top:0" width="19" height="19" viewBox="0 0 19 19"><path d="M3 9Q9 3 16 9Q9 13 3 9Z" fill="#fff" stroke="#000" stroke-width="1"/><circle cx="9" cy="9" r="2.6" fill="#000"/><path d="M6 5L5 2M9 4V1M12 5L13 2M14 6L16 4" stroke="#000" stroke-width=".8"/><path d="M12.5 15H16.5L14.5 17.5Z" fill="#fff" stroke="#000" stroke-width=".7"/></svg></div>
<div class="ib" style="left:39px;top:779px;width:21px;height:21px;background:#acacac;"><svg style="left:0;top:0" width="19" height="19" viewBox="0 0 19 19"><rect x="2" y="2" width="15" height="15" fill="#555"/><rect x="3.0" y="3.0" width="1.8" height="1.8" fill="rgb(240,240,240)"/><rect x="5.2" y="3.0" width="1.8" height="1.8" fill="rgb(220,220,220)"/><rect x="7.4" y="3.0" width="1.8" height="1.8" fill="rgb(200,200,200)"/><rect x="9.6" y="3.0" width="1.8" height="1.8" fill="rgb(180,180,180)"/><rect x="11.8" y="3.0" width="1.8" height="1.8" fill="rgb(160,160,160)"/><rect x="14.0" y="3.0" width="1.8" height="1.8" fill="rgb(140,140,140)"/><rect x="3.0" y="5.2" width="1.8" height="1.8" fill="rgb(220,220,220)"/><rect x="5.2" y="5.2" width="1.8" height="1.8" fill="rgb(200,200,200)"/><rect x="7.4" y="5.2" width="1.8" height="1.8" fill="rgb(180,180,180)"/><rect x="9.6" y="5.2" width="1.8" height="1.8" fill="rgb(160,160,160)"/><rect x="11.8" y="5.2" width="1.8" height="1.8" fill="rgb(140,140,140)"/><rect x="14.0" y="5.2" width="1.8" height="1.8" fill="rgb(120,120,120)"/><rect x="3.0" y="7.4" width="1.8" height="1.8" fill="rgb(200,200,200)"/><rect x="5.2" y="7.4" width="1.8" height="1.8" fill="rgb(180,180,180)"/><rect x="7.4" y="7.4" width="1.8" height="1.8" fill="rgb(160,160,160)"/><rect x="9.6" y="7.4" width="1.8" height="1.8" fill="rgb(140,140,140)"/><rect x="11.8" y="7.4" width="1.8" height="1.8" fill="rgb(120,120,120)"/><rect x="14.0" y="7.4" width="1.8" height="1.8" fill="rgb(100,100,100)"/><rect x="3.0" y="9.6" width="1.8" height="1.8" fill="rgb(180,180,180)"/><rect x="5.2" y="9.6" width="1.8" height="1.8" fill="rgb(160,160,160)"/><rect x="7.4" y="9.6" width="1.8" height="1.8" fill="rgb(140,140,140)"/><rect x="9.6" y="9.6" width="1.8" height="1.8" fill="rgb(120,120,120)"/><rect x="11.8" y="9.6" width="1.8" height="1.8" fill="rgb(100,100,100)"/><rect x="14.0" y="9.6" width="1.8" height="1.8" fill="rgb(80,80,80)"/><rect x="3.0" y="11.8" width="1.8" height="1.8" fill="rgb(160,160,160)"/><rect x="5.2" y="11.8" width="1.8" height="1.8" fill="rgb(140,140,140)"/><rect x="7.4" y="11.8" width="1.8" height="1.8" fill="rgb(120,120,120)"/><rect x="9.6" y="11.8" width="1.8" height="1.8" fill="rgb(100,100,100)"/><rect x="11.8" y="11.8" width="1.8" height="1.8" fill="rgb(80,80,80)"/><rect x="14.0" y="11.8" width="1.8" height="1.8" fill="rgb(60,60,60)"/><rect x="3.0" y="14.0" width="1.8" height="1.8" fill="rgb(140,140,140)"/><rect x="5.2" y="14.0" width="1.8" height="1.8" fill="rgb(120,120,120)"/><rect x="7.4" y="14.0" width="1.8" height="1.8" fill="rgb(100,100,100)"/><rect x="9.6" y="14.0" width="1.8" height="1.8" fill="rgb(80,80,80)"/><rect x="11.8" y="14.0" width="1.8" height="1.8" fill="rgb(60,60,60)"/><rect x="14.0" y="14.0" width="1.8" height="1.8" fill="rgb(40,40,40)"/><path d="M9.5 0V2M9.5 17V19M0 9.5H2M17 9.5H19" stroke="#000"/></svg></div>
<div class="ib" style="left:66px;top:779px;width:21px;height:21px;background:#acacac;"><svg style="left:0;top:0" width="19" height="19" viewBox="0 0 19 19"><path d="M9 2Q17 2 17 9.5Q17 17 9 17Z" fill="#5c5"/><rect x="4.0" y="3.0" width="1.8" height="1.8" fill="#9c9"/><rect x="6.3" y="3.0" width="1.8" height="1.8" fill="#9c9"/><rect x="8.6" y="3.0" width="1.8" height="1.8" fill="#3c3"/><rect x="10.9" y="3.0" width="1.8" height="1.8" fill="#3c3"/><rect x="13.2" y="3.0" width="1.8" height="1.8" fill="#3c3"/><rect x="4.0" y="5.3" width="1.8" height="1.8" fill="#9c9"/><rect x="6.3" y="5.3" width="1.8" height="1.8" fill="#9c9"/><rect x="8.6" y="5.3" width="1.8" height="1.8" fill="#3c3"/><rect x="10.9" y="5.3" width="1.8" height="1.8" fill="#3c3"/><rect x="13.2" y="5.3" width="1.8" height="1.8" fill="#3c3"/><rect x="4.0" y="7.6" width="1.8" height="1.8" fill="#9c9"/><rect x="6.3" y="7.6" width="1.8" height="1.8" fill="#9c9"/><rect x="8.6" y="7.6" width="1.8" height="1.8" fill="#3c3"/><rect x="10.9" y="7.6" width="1.8" height="1.8" fill="#3c3"/><rect x="13.2" y="7.6" width="1.8" height="1.8" fill="#3c3"/><rect x="4.0" y="9.9" width="1.8" height="1.8" fill="#9c9"/><rect x="6.3" y="9.9" width="1.8" height="1.8" fill="#9c9"/><rect x="8.6" y="9.9" width="1.8" height="1.8" fill="#3c3"/><rect x="10.9" y="9.9" width="1.8" height="1.8" fill="#3c3"/><rect x="13.2" y="9.9" width="1.8" height="1.8" fill="#3c3"/><rect x="4.0" y="12.2" width="1.8" height="1.8" fill="#9c9"/><rect x="6.3" y="12.2" width="1.8" height="1.8" fill="#9c9"/><rect x="8.6" y="12.2" width="1.8" height="1.8" fill="#3c3"/><rect x="10.9" y="12.2" width="1.8" height="1.8" fill="#3c3"/><rect x="13.2" y="12.2" width="1.8" height="1.8" fill="#3c3"/><rect x="4.0" y="14.5" width="1.8" height="1.8" fill="#9c9"/><rect x="6.3" y="14.5" width="1.8" height="1.8" fill="#9c9"/><rect x="8.6" y="14.5" width="1.8" height="1.8" fill="#3c3"/><rect x="10.9" y="14.5" width="1.8" height="1.8" fill="#3c3"/><rect x="13.2" y="14.5" width="1.8" height="1.8" fill="#3c3"/></svg></div>
<div class="ib" style="left:91px;top:779px;width:21px;height:21px;background:#acacac;"><svg style="left:0;top:0" width="19" height="19" viewBox="0 0 19 19"><text x="9.5" y="15" font-size="15" font-family="Liberation Sans" fill="#fff" text-anchor="middle">A</text><path d="M12.5 15H16.5L14.5 17.5Z" fill="#fff" stroke="#000" stroke-width=".7"/></svg></div>
<div class="ib" style="left:116px;top:779px;width:21px;height:21px;background:#acacac;"><svg style="left:0;top:0" width="19" height="19" viewBox="0 0 19 19"><rect x="7" y="1" width="10" height="10" fill="#333"/><rect x="1" y="5" width="10" height="12" fill="#222"/><rect x="8.0" y="2.0" width="2.4" height="2.4" fill="#ff0"/><rect x="2.0" y="6.0" width="2.4" height="2.4" fill="#06f"/><rect x="11.0" y="2.0" width="2.4" height="2.4" fill="#ff0"/><rect x="5.0" y="6.0" width="2.4" height="2.4" fill="#06f"/><rect x="14.0" y="2.0" width="2.4" height="2.4" fill="#ff0"/><rect x="8.0" y="6.0" width="2.4" height="2.4" fill="#06f"/><rect x="8.0" y="5.0" width="2.4" height="2.4" fill="#ff0"/><rect x="2.0" y="9.3" width="2.4" height="2.4" fill="#0c0"/><rect x="11.0" y="5.0" width="2.4" height="2.4" fill="#ff0"/><rect x="5.0" y="9.3" width="2.4" height="2.4" fill="#0c0"/><rect x="14.0" y="5.0" width="2.4" height="2.4" fill="#ff0"/><rect x="8.0" y="9.3" width="2.4" height="2.4" fill="#0c0"/><rect x="8.0" y="8.0" width="2.4" height="2.4" fill="#ff0"/><rect x="2.0" y="12.6" width="2.4" height="2.4" fill="#0c0"/><rect x="11.0" y="8.0" width="2.4" height="2.4" fill="#ff0"/><rect x="5.0" y="12.6" width="2.4" height="2.4" fill="#0c0"/><rect x="14.0" y="8.0" width="2.4" height="2.4" fill="#ff0"/><rect x="8.0" y="12.6" width="2.4" height="2.4" fill="#0c0"/><path d="M12.5 15H16.5L14.5 17.5Z" fill="#fff" stroke="#000" stroke-width=".7"/></svg></div>
<div class="ib" style="left:141px;top:779px;width:21px;height:21px;background:#acacac;"><svg style="left:0;top:0" width="19" height="19" viewBox="0 0 19 19"><path d="M9.5 1V18M1 9.5H18" stroke="#ff0" stroke-width="1.2"/><rect x="7" y="7" width="5" height="5" fill="none" stroke="#ff0" stroke-width="1.2"/><path d="M8 9.5H11M9.5 8V11" stroke="#333" stroke-width=".8"/><path d="M12.5 15H16.5L14.5 17.5Z" fill="#fff" stroke="#000" stroke-width=".7"/></svg></div>
<div class="ib" style="left:166px;top:779px;width:21px;height:21px;background:#acacac;"><svg style="left:0;top:0" width="19" height="19" viewBox="0 0 19 19"><path d="M9.5 1V18M1 9.5H18" stroke="#000" stroke-width="1.2"/><g fill="#777"><circle cx="5" cy="5" r=".5"/><circle cx="14" cy="5" r=".5"/><circle cx="5" cy="14" r=".5"/><circle cx="14" cy="14" r=".5"/></g><path d="M12.5 15H16.5L14.5 17.5Z" fill="#fff" stroke="#000" stroke-width=".7"/></svg></div>
<div class="ib" style="left:193px;top:779px;width:21px;height:21px;background:#acacac;"><svg style="left:0;top:0" width="19" height="19" viewBox="0 0 19 19"><rect x="0" y="0" width="6" height="2.5" fill="#e33"/><rect x="6" y="0" width="7" height="2.5" fill="#ee3"/><rect x="13" y="0" width="6" height="2.5" fill="#3b3"/><path d="M9.5 5V17M3.5 11H15.5" stroke="#333" stroke-width="1"/><path d="M9.5 4L7.5 6.5H11.5ZM9.5 18L7.5 15.5H11.5ZM2.5 11L5 9V13ZM16.5 11L14 9V13Z" fill="#333"/><path d="M12.5 15H16.5L14.5 17.5Z" fill="#fff" stroke="#000" stroke-width=".7"/></svg></div>
<div class="ib" style="left:218px;top:779px;width:21px;height:21px;background:#fff;border-right:none"><svg style="left:0;top:0" width="19" height="19" viewBox="0 0 19 19"><rect x="3" y="3" width="9" height="9" fill="#ccc" stroke="#000" stroke-width="1.2"/><rect x="6" y="6" width="9" height="9" fill="#ddd" stroke="#000" stroke-width="1.2"/><rect x="6.6" y="6.6" width="5" height="5" fill="#ccc"/></svg></div>
<div class="ib" style="left:242px;top:779px;width:21px;height:21px;background:#fff;"><svg style="left:0;top:0" width="19" height="19" viewBox="0 0 19 19"><rect x="4" y="3" width="8" height="8" fill="#eee" stroke="#aaa" stroke-width="1"/><rect x="7" y="6" width="9" height="9" fill="#ddd" stroke="#000" stroke-width="1.2"/><text x="11.5" y="13.6" font-size="8" font-weight="bold" font-family="Liberation Sans" text-anchor="middle">B</text></svg></div>
<div class="a" style="left:265px;top:780px;width:110px;height:19px;background:#acacac;border-top:2px solid #9a9a9a;border-left:2px solid #c8c8c8;border-bottom:2px solid #e8e8e8;border-right:2px solid #e8e8e8"><div class="a" style="left:1px;top:1px;width:28px;height:13px;background:#fff;border-right:1px solid #c8c8c8;border-bottom:1px solid #bbb"><div class="a" style="left:13px;top:0;width:1px;height:12px;background:#c8c8c8"></div></div></div>
<div class="ib" style="left:379px;top:779px;width:21px;height:21px;background:#fff;"><svg style="left:0;top:0" width="19" height="19" viewBox="0 0 19 19"><rect x="6" y="7" width="9" height="9" fill="#ccc"/><rect x="3" y="3" width="9" height="9" fill="#ddd" stroke="#000" stroke-width="1.2"/><text x="7.5" y="10.6" font-size="8" font-weight="bold" font-family="Liberation Sans" text-anchor="middle">F</text></svg></div>
<div class="a" style="left:13.5px;top:854.5px;width:65px;height:65px;background:#fff;border:1px solid #a8a898"></div>
<svg style="left:13px;top:854px" width="66" height="66" viewBox="13 854 66 66">
<path d="M45.6 866V907.6M27.2 887.3H64.1M32.1 874.3L58.9 900.4" stroke="#99977f" stroke-width="1"/>
<circle cx="45.6" cy="887.3" r="1.8" fill="#000"/>
<g font-family="Liberation Sans" font-size="9.5" text-anchor="middle">
<text x="48.3" y="867.5">S</text><text x="25.3" y="871.5">P</text><text x="68.4" y="886.5">L</text>
<text x="23.7" y="896">R</text><text x="40.4" y="912.5">I</text><text x="64.1" y="910.3">A</text></g></svg>
<div class="ib" style="left:89px;top:854px;width:21px;height:21px;background:#fff;"><svg style="left:0;top:0" width="19" height="19" viewBox="0 0 19 19"><path d="M6 3Q1 9.5 6 16" fill="none" stroke="#3a7ac8" stroke-width="2.4"/><path d="M4 2L9 3L6 6Z" fill="#1a4a98"/><path d="M5 9.5H17M11.5 4V15" stroke="#000" stroke-width=".9"/><circle cx="11.5" cy="9.5" r="2.2" fill="none" stroke="#000" stroke-width=".9"/></svg></div>
<div class="ib" style="left:116px;top:854px;width:21px;height:21px;background:#fff;"><svg style="left:0;top:0" width="19" height="19" viewBox="0 0 19 19"><rect x="0" y="0" width="19" height="19" fill="#c8c8f0"/><path d="M9.5 0V19M0 9.5H19" stroke="#000" stroke-width="1"/><rect x="4.5" y="4.5" width="10" height="10" fill="#e6e6fa" stroke="#000"/><rect x="7" y="7" width="5" height="5" fill="#fff" stroke="#000" stroke-width=".8"/></svg></div>
<div class="ib" style="left:141px;top:853px;width:21px;height:21px;background:#fff;"><svg style="left:0;top:0" width="19" height="19" viewBox="0 0 19 19"><rect x="2.5" y="2.5" width="14" height="14" fill="none" stroke="#000" stroke-dasharray="1.5 1.5"/><rect x="5.5" y="5.5" width="8" height="8" fill="#c8c8f0" stroke="#000" stroke-width="1.2"/></svg></div>
<div class="ib" style="left:170px;top:854px;width:21px;height:21px;background:#fff;"><svg style="left:0;top:0" width="19" height="19" viewBox="0 0 19 19"><circle cx="11" cy="7.5" r="5" fill="#eee" stroke="#111" stroke-width="1.6"/><path d="M8.5 7.5H13.5M11 5V10" stroke="#000" stroke-width="1.2"/><path d="M7.5 11L2.5 17" stroke="#333" stroke-width="2.2"/></svg></div>
<div class="a" style="left:197px;top:858px;width:11px;height:11px;background:#d0dae6;border:1px solid #b8b8b8"></div>
<div class="ib" style="left:212px;top:853px;width:21px;height:21px;background:#fff;border:1px dotted #888;box-shadow:none"><svg style="left:0;top:0" width="19" height="19" viewBox="0 0 19 19"><rect x="0" y="0" width="19" height="19" fill="#c8c8f0"/><rect x="6.5" y="6.5" width="6" height="6" fill="#fff" stroke="#000" stroke-width="1.2"/><rect x="8.5" y="8.5" width="2" height="2" fill="#000"/><path d="M4 14Q1 8 6 3M15 5Q18 11 13 16" fill="none" stroke="#888" stroke-width="1.3"/><path d="M2 17L5 16L3 14Z" fill="#000"/><path d="M17 2L14 3L16 5Z" fill="#000"/></svg></div>
<div class="ib" style="left:89px;top:877px;width:21px;height:21px;background:#fff;"><svg style="left:0;top:0" width="19" height="19" viewBox="0 0 19 19"><circle cx="9.5" cy="9.5" r="7" fill="none" stroke="#3a6ac0" stroke-width="2"/><rect x="12" y="13" width="5" height="4" fill="#1a4a98"/><path d="M5 9.5H14M9.5 5V14" stroke="#000" stroke-width=".8"/><circle cx="9.5" cy="9.5" r="2" fill="none" stroke="#000" stroke-width=".9"/></svg></div>
<div class="ib" style="left:116px;top:877px;width:21px;height:21px;background:#fff;"><svg style="left:0;top:0" width="19" height="19" viewBox="0 0 19 19"><rect x="0" y="0" width="19" height="19" fill="#c8c8f0"/><path d="M3 7L7 3H16V12L12 16H3Z" fill="#fff" stroke="#000" stroke-width="1"/><path d="M3 7H12V16M12 7L16 3" fill="none" stroke="#000" stroke-width="1"/></svg></div>
<div class="ib" style="left:143px;top:877px;width:21px;height:21px;background:#fff;"><svg style="left:0;top:0" width="19" height="19" viewBox="0 0 19 19"><rect x="2.5" y="6" width="14" height="9" rx="1.5" fill="#555" stroke="#222"/><rect x="4" y="4" width="4" height="2" fill="#555"/><circle cx="9.5" cy="10.5" r="3.4" fill="#000" stroke="#ddd" stroke-width="1"/></svg></div>
<div class="ib" style="left:170px;top:877px;width:21px;height:21px;background:#fff;"><svg style="left:0;top:0" width="19" height="19" viewBox="0 0 19 19"><circle cx="11" cy="7.5" r="5" fill="#eee" stroke="#111" stroke-width="1.6"/><path d="M8.5 7.5H13.5" stroke="#000" stroke-width="1.2"/><path d="M7.5 11L2.5 17" stroke="#333" stroke-width="2.2"/></svg></div>
<div class="a" style="left:197px;top:881px;width:11px;height:11px;background:#d0dae6;border:1px solid #b8b8b8"></div>
<div class="ib" style="left:212px;top:876px;width:21px;height:21px;background:#fff;border:1px dotted #888;box-shadow:none"><svg style="left:0;top:0" width="19" height="19" viewBox="0 0 19 19"><rect x="0" y="0" width="19" height="19" fill="#c8c8f0"/><rect x="6.5" y="2.5" width="6" height="6" fill="#fff" stroke="#000" stroke-width="1.2"/><rect x="8.5" y="4.5" width="2" height="2" fill="#000"/><path d="M3 13Q9.5 19 16 13" fill="none" stroke="#888" stroke-width="1.3"/><path d="M2 11H5L2 14Z" fill="#000"/><path d="M17 11H14L17 14Z" fill="#000"/></svg></div>
<div class="ib" style="left:89px;top:900px;width:21px;height:21px;background:#fff;"><svg style="left:0;top:0" width="19" height="19" viewBox="0 0 19 19"><path d="M9.5 2V15M4 6.5H15" stroke="#000" stroke-width=".9"/><circle cx="9.5" cy="6.5" r="2.2" fill="none" stroke="#000" stroke-width=".9"/><path d="M4 12Q2 16 9.5 16Q17 16 15 12" fill="none" stroke="#3a7ac8" stroke-width="2.2"/><path d="M2 12L6 11L3 16Z" fill="#1a4a98"/></svg></div>
<div class="ib" style="left:114px;top:899px;width:21px;height:21px;background:#fff;"><svg style="left:0;top:0" width="19" height="19" viewBox="0 0 19 19"><rect x="0" y="0" width="19" height="19" fill="#c8c8f0"/><path d="M3 9Q9 3 16 9Q9 13 3 9Z" fill="#fff" stroke="#000" stroke-width="1"/><circle cx="8.5" cy="9" r="2.6" fill="#000"/><path d="M6 5L5 2M9 4V1M12 5L13 2M14 6L16 4" stroke="#000" stroke-width=".8"/><path d="M12.5 15H16.5L14.5 17.5Z" fill="#fff" stroke="#000" stroke-width=".7"/></svg></div>
<div class="ib" style="left:141px;top:900px;width:21px;height:21px;background:#fff;"><svg style="left:0;top:0" width="19" height="19" viewBox="0 0 19 19"><rect x="6" y="7" width="9" height="8" fill="#aaa"/><rect x="4" y="5" width="9" height="8" fill="#ccc" stroke="#555" stroke-width=".6"/><rect x="2" y="3" width="9" height="7" rx="1" fill="#555" stroke="#000"/><circle cx="6.5" cy="6.5" r="2" fill="#000" stroke="#eee" stroke-width=".8"/><path d="M12.5 15H16.5L14.5 17.5Z" fill="#fff" stroke="#000" stroke-width=".7"/></svg></div>
<div class="ib" style="left:168px;top:899px;width:21px;height:21px;background:#fff;"><svg style="left:0;top:0" width="19" height="19" viewBox="0 0 19 19"><path d="M3 11V3Q3 2 5 2M16 11V3Q16 2 14 2" fill="none" stroke="#000" stroke-width=".8"/><rect x="2" y="9" width="6" height="5" fill="#e8102a" stroke="#000" stroke-width=".8"/><rect x="11" y="9" width="6" height="5" fill="#1a90e0" stroke="#000" stroke-width=".8"/><path d="M8 11H11" stroke="#000"/><path d="M12.5 15H16.5L14.5 17.5Z" fill="#fff" stroke="#000" stroke-width=".7"/></svg></div>
<div class="a" style="left:243px;top:847px;width:150px;height:80px;background:#b2b2e6"></div>
<div class="a" style="left:303px;top:872px;width:30px;height:30px;border:2px solid #006600;border-radius:3px"></div>
<div class="a" style="left:307px;top:876px;width:22px;height:22px;border:1.5px solid #ff00ff"></div>
<div class="ib" style="left:10px;top:72px;width:21px;height:21px;background:#fff;"><svg style="left:0;top:0" width="19" height="19" viewBox="0 0 19 19"><path d="M2.5 8.5H11V7H16.5V17.5H2.5Z" fill="#f2d480" stroke="#000" stroke-width="1"/><path d="M7.5 1L2.5 6H5.5V11H9.5V6H12.5Z" fill="#e8700a" stroke="#b05000" stroke-width=".5"/></svg></div>
<div class="ib" style="left:41px;top:73px;width:21px;height:21px;background:#fff;"><svg style="left:0;top:0" width="19" height="19" viewBox="0 0 19 19"><path d="M2.5 8.5H11V7H16.5V17.5H2.5Z" fill="#f2d480" stroke="#000" stroke-width="1"/><path d="M9.5 11L4.5 6H7.5V1H11.5V6H14.5Z" fill="#e8700a" stroke="#b05000" stroke-width=".5"/></svg></div>
<div class="a" style="left:68px;top:68px;width:2px;height:29px;background:#b8b8b8;border-right:1px solid #eee"></div>
<div class="t" style="left:85.5px;top:78px;font-size:9px;letter-spacing:-0.6px;color:#000;-webkit-text-stroke:0.3px #000">Modules:</div>
<div class="a" style="left:134px;top:70px;width:162px;height:25px;background:#fff;border-top:1px solid #a8a8a8;border-left:1px solid #a8a8a8;border-right:2px solid #c8c8c8;border-bottom:2px solid #c8c8c8"></div>
<div class="t" style="left:149.5px;top:78px;font-size:9px;letter-spacing:-0.44px;color:#000;-webkit-text-stroke:0.3px #000">EMSegment Template Builder</div>
<div class="a" style="left:274px;top:80px;width:14px;height:4px;background:#e0e0e0;border:1px solid #b8b8b8;border-top-color:#fff"></div>
<div class="ib" style="left:305px;top:73px;width:21px;height:21px;background:#fff;"><svg style="left:0;top:0" width="19" height="19" viewBox="0 0 19 19"><path d="M12 5V15L6 10Z" fill="#888" stroke="#444" stroke-width=".8"/></svg></div>
<div class="ib" style="left:336px;top:73px;width:21px;height:21px;background:#fff;"><svg style="left:0;top:0" width="19" height="19" viewBox="0 0 19 19"><path d="M7 5V15L13 10Z" fill="#888" stroke="#444" stroke-width=".8"/></svg></div>
<div class="ib" style="left:365px;top:72px;width:21px;height:21px;background:#fff;"><svg style="left:0;top:0" width="19" height="19" viewBox="0 0 19 19"><defs><linearGradient id="cmg" x1="0" y1="0" x2="0" y2="1"><stop offset="0" stop-color="#111"/><stop offset="1" stop-color="#fff"/></linearGradient></defs><rect x="3" y="2" width="13" height="11" fill="url(#cmg)"/><path d="M12 15H16L14 17Z" fill="#333"/></svg></div>
<div class="ib" style="left:396px;top:73px;width:21px;height:21px;background:#fff;"><svg style="left:0;top:0" width="19" height="19" viewBox="0 0 19 19"><path d="M14 10A5 5 0 1 1 10 5" fill="none" stroke="#333" stroke-width="2"/><path d="M9 3L16 3L14 9Z" fill="#888" stroke="#333" stroke-width=".8"/></svg></div>
<div class="a" style="left:424px;top:70px;width:84px;height:25px;background:#fff;border-top:2px solid #b0b0b0;border-left:2px solid #b0b0b0;border-right:2px solid #e0e0e0;border-bottom:2px solid #e0e0e0"></div>
<div class="t" style="left:427px;top:77.5px;font-size:9px;color:#666;letter-spacing:-0.57px">search modules</div>
<div class="ib" style="left:514px;top:72px;width:21px;height:21px;background:#fff;"><svg style="left:0;top:0" width="19" height="19" viewBox="0 0 19 19"><rect x="3" y="3" width="5" height="4" fill="#555"/><rect x="11" y="3" width="5" height="4" fill="#555"/><rect x="2" y="7" width="7" height="10" rx="1" fill="#999" stroke="#222"/><rect x="10" y="7" width="7" height="10" rx="1" fill="#999" stroke="#222"/><rect x="8" y="9" width="3" height="3" fill="#333"/></svg></div>
<div class="ib" style="left:545px;top:73px;width:21px;height:21px;background:#fff;"><svg style="left:0;top:0" width="19" height="19" viewBox="0 0 19 19"><path d="M2 10L9.5 3L17 10" fill="none" stroke="#666" stroke-width="1.6"/><path d="M5 9V17H14V9" fill="#fff" stroke="#000" stroke-width="1"/><rect x="8.5" y="12" width="3" height="5" fill="#c02010"/></svg></div>
<div class="ib" style="left:576px;top:73px;width:21px;height:21px;background:#fff;"><svg style="left:0;top:0" width="19" height="19" viewBox="0 0 19 19"><path d="M9.5 3L5 9L2 16M5 9L9 16M9.5 3L14 9L11 16M14 9L17 16" fill="none" stroke="#000" stroke-width="1"/><rect x="8" y="2" width="3" height="2" fill="#e02010"/><rect x="4" y="8" width="3" height="2" fill="#e02010"/><rect x="13" y="8" width="3" height="2" fill="#e02010"/><rect x="1" y="15" width="3" height="2" fill="#e02010"/><rect x="8" y="15" width="3" height="2" fill="#e02010"/><rect x="15" y="15" width="3" height="2" fill="#e02010"/></svg></div>
<div class="ib" style="left:607px;top:73px;width:21px;height:21px;background:#fff;"><svg style="left:0;top:0" width="19" height="19" viewBox="0 0 19 19"><g transform="translate(6,2)" fill="none" stroke="#bbb" stroke-width="1"><rect x="0.5" y="0.5" width="10" height="10" fill="#fff"/><path d="M3.8 0.5V10.5M7.2 0.5V10.5M0.5 3.8H10.5M0.5 7.2H10.5"/></g><g transform="translate(4,4)" fill="none" stroke="#888" stroke-width="1"><rect x="0.5" y="0.5" width="10" height="10" fill="#fff"/><path d="M3.8 0.5V10.5M7.2 0.5V10.5M0.5 3.8H10.5M0.5 7.2H10.5"/></g><g transform="translate(2,6)" fill="none" stroke="#000" stroke-width="1"><rect x="0.5" y="0.5" width="10" height="10" fill="#fff"/><path d="M3.8 0.5V10.5M7.2 0.5V10.5M0.5 3.8H10.5M0.5 7.2H10.5"/></g></svg></div>
<div class="ib" style="left:638px;top:73px;width:21px;height:21px;background:#fff;"><svg style="left:0;top:0" width="19" height="19" viewBox="0 0 19 19"><path d="M6 2H13L17 6V13L13 17H6L2 13V6Z" fill="#7aa060" stroke="#2a4a1a"/><rect x="5" y="6" width="4" height="7" fill="#c8e0b0" stroke="#2a4a1a" stroke-width=".6"/><rect x="10" y="6" width="4" height="7" fill="#c8e0b0" stroke="#2a4a1a" stroke-width=".6"/></svg></div>
<div class="ib" style="left:669px;top:73px;width:21px;height:21px;background:#fff;"><svg style="left:0;top:0" width="19" height="19" viewBox="0 0 19 19"><g transform="rotate(45 7 7)" fill="none" stroke="#000" stroke-width=".8"><rect x="2" y="2" width="10" height="10"/><path d="M4.5 2V12M7 2V12M9.5 2V12M2 4.5H12M2 7H12M2 9.5H12"/></g><g transform="translate(7,7)" fill="none" stroke="#000" stroke-width="1"><rect x="0.5" y="0.5" width="10" height="10" fill="#fff"/><path d="M3.8 0.5V10.5M7.2 0.5V10.5M0.5 3.8H10.5M0.5 7.2H10.5"/></g></svg></div>
<div class="ib" style="left:700px;top:73px;width:21px;height:21px;background:#fff;"><svg style="left:0;top:0" width="19" height="19" viewBox="0 0 19 19"><g stroke="#e03010" stroke-width="1"><path d="M9.5 1V6M7 3.5H12M8 2L11 5M11 2L8 5"/><path d="M4 10V15M1.5 12.5H6.5M2.5 11L5.5 14M5.5 11L2.5 14"/><path d="M15 10V15M12.5 12.5H17.5M13.5 11L16.5 14M16.5 11L13.5 14"/></g></svg></div>
<div class="ib" style="left:731px;top:73px;width:21px;height:21px;background:#fff;"><svg style="left:0;top:0" width="19" height="19" viewBox="0 0 19 19"><g fill="#3a9a2a" stroke="#0a4a0a" stroke-width=".6"><rect x="6" y="3" width="9" height="6"/><rect x="2" y="6" width="9" height="8"/></g><path d="M3 8H10M3 11H10M5 6V14M8 6V14M8 5H15M11 3V9M13 3V9" stroke="#bfe8a0" stroke-width=".6"/><path d="M13 15H17L15 17Z" fill="#333"/></svg></div>
<div class="ib" style="left:762px;top:73px;width:21px;height:21px;background:#fff;"><svg style="left:0;top:0" width="19" height="19" viewBox="0 0 19 19"><path d="M3 16L14 3L16 5L5 18Z" fill="#eee" stroke="#444" stroke-width=".8"/><path d="M6 15Q10 12 12 16T17 15" fill="none" stroke="#e03050" stroke-width="1"/></svg></div>
<div class="ib" style="left:793px;top:73px;width:21px;height:21px;background:#fff;"><svg style="left:0;top:0" width="19" height="19" viewBox="0 0 19 19"><rect x="2" y="2" width="15" height="15" fill="#222"/><rect x="3.0" y="3.0" width="2.2" height="2.2" fill="#f00"/><rect x="5.8" y="3.0" width="2.2" height="2.2" fill="#00f"/><rect x="8.6" y="3.0" width="2.2" height="2.2" fill="#ff0"/><rect x="11.4" y="3.0" width="2.2" height="2.2" fill="#888"/><rect x="14.2" y="3.0" width="2.2" height="2.2" fill="#0cf"/><rect x="3.0" y="5.8" width="2.2" height="2.2" fill="#0c0"/><rect x="5.8" y="5.8" width="2.2" height="2.2" fill="#f00"/><rect x="8.6" y="5.8" width="2.2" height="2.2" fill="#00f"/><rect x="11.4" y="5.8" width="2.2" height="2.2" fill="#ff0"/><rect x="14.2" y="5.8" width="2.2" height="2.2" fill="#888"/><rect x="3.0" y="8.6" width="2.2" height="2.2" fill="#c0c"/><rect x="5.8" y="8.6" width="2.2" height="2.2" fill="#0c0"/><rect x="8.6" y="8.6" width="2.2" height="2.2" fill="#f00"/><rect x="11.4" y="8.6" width="2.2" height="2.2" fill="#00f"/><rect x="14.2" y="8.6" width="2.2" height="2.2" fill="#ff0"/><rect x="3.0" y="11.4" width="2.2" height="2.2" fill="#f80"/><rect x="5.8" y="11.4" width="2.2" height="2.2" fill="#c0c"/><rect x="8.6" y="11.4" width="2.2" height="2.2" fill="#0c0"/><rect x="11.4" y="11.4" width="2.2" height="2.2" fill="#f00"/><rect x="14.2" y="11.4" width="2.2" height="2.2" fill="#00f"/><rect x="3.0" y="14.2" width="2.2" height="2.2" fill="#0cf"/><rect x="5.8" y="14.2" width="2.2" height="2.2" fill="#f80"/><rect x="8.6" y="14.2" width="2.2" height="2.2" fill="#c0c"/><rect x="11.4" y="14.2" width="2.2" height="2.2" fill="#0c0"/><rect x="14.2" y="14.2" width="2.2" height="2.2" fill="#f00"/></svg></div>
<div class="a" style="left:821px;top:68px;width:2px;height:29px;background:#b8b8b8;border-right:1px solid #eee"></div>
<div class="ib" style="left:830px;top:73px;width:21px;height:21px;background:#fff;"><svg style="left:0;top:0" width="19" height="19" viewBox="0 0 19 19"><rect x="2" y="2" width="15" height="15" fill="#aab0e0"/><rect x="3" y="8" width="13" height="8" rx="1" fill="#555" stroke="#111"/><rect x="5" y="6" width="4" height="2" fill="#555"/><circle cx="10" cy="12" r="3.2" fill="#111" stroke="#ccc" stroke-width="1"/></svg></div>
<div class="a" style="left:857px;top:68px;width:2px;height:29px;background:#b8b8b8;border-right:1px solid #eee"></div>
<div class="ib" style="left:865px;top:72px;width:21px;height:21px;background:#fff;"><svg style="left:0;top:0" width="19" height="19" viewBox="0 0 19 19"><rect x="0" y="0" width="19" height="11" fill="#c8c8e8"/><rect x="6" y="2" width="7" height="7" fill="none" stroke="#333"/><rect x="8" y="4" width="3" height="3" fill="none" stroke="#333" stroke-width=".7"/><rect x="0" y="11" width="19" height="8" fill="#999"/><path d="M6 11V19M12 11V19" stroke="#ddd"/><path d="M13 13H18L15.5 16Z" fill="#fff" stroke="#222" stroke-width=".6"/></svg></div>
<div class="a" style="left:892px;top:68px;width:2px;height:29px;background:#b8b8b8;border-right:1px solid #eee"></div>
<div class="ib" style="left:900px;top:73px;width:21px;height:21px;background:#fff;border:1px dotted #8a8a8a;box-shadow:none"><svg style="left:0;top:0" width="19" height="19" viewBox="0 0 19 19"><path d="M9.5 7L6 12H8.5V18H10.5V12H13Z" fill="#2a5ac8"/><rect x="7.5" y="2" width="4" height="4" fill="none" stroke="#e02020" stroke-width="1.2"/></svg></div>
<div class="ib" style="left:929px;top:73px;width:21px;height:21px;background:#fff;border:1px dotted #8a8a8a;box-shadow:none"><svg style="left:0;top:0" width="19" height="19" viewBox="0 0 19 19"><path d="M9.5 7L6 12H8.5V18H10.5V12H13Z" fill="#2a5ac8"/><path d="M9.5 1V6M7 3.5H12M8 2L11 5M11 2L8 5" stroke="#e02020" stroke-width=".9"/></svg></div>
<div class="ib" style="left:958px;top:73px;width:21px;height:21px;background:#fff;"><svg style="left:0;top:0" width="19" height="19" viewBox="0 0 19 19"><path d="M4 9A6 6 0 0 1 15 7" fill="none" stroke="#3a8ad8" stroke-width="2.6"/><path d="M15 11A6 6 0 0 1 4 13" fill="none" stroke="#3a8ad8" stroke-width="2.6"/><path d="M12 4L17 8L12 9Z" fill="#1a5aa8"/><path d="M7 16L2 12L7 11Z" fill="#1a5aa8"/></svg></div>
</body></html>
